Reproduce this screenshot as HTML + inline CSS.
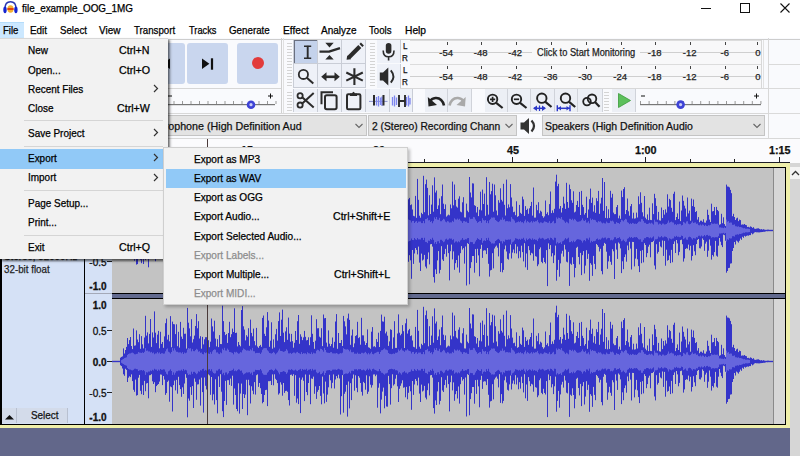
<!DOCTYPE html><html><head><meta charset="utf-8"><style>
html,body{margin:0;padding:0}
body{width:800px;height:456px;overflow:hidden;position:relative;background:#f0f0f0;font-family:"Liberation Sans",sans-serif}
.t{position:absolute;white-space:pre;transform-origin:0 0;-webkit-text-stroke:0.25px currentColor}
.a{position:absolute}
</style></head><body>
<div style="position:absolute;left:0;top:0;width:800px;height:22px;background:#fff"></div>
<svg style="position:absolute;left:0;top:0" width="22" height="22" viewBox="0 0 22 22">
<path d="M5 8.5 Q5 1.8 10.5 1.8 Q16 1.8 16 8.5" fill="none" stroke="#2836b0" stroke-width="1.4"/>
<ellipse cx="5" cy="9.8" rx="1.7" ry="3.4" fill="#1524d0"/>
<ellipse cx="15.9" cy="9.8" rx="1.7" ry="3.4" fill="#1524d0"/>
<ellipse cx="10.5" cy="9" rx="3.1" ry="3.7" fill="#f5b030"/>
<rect x="7.4" y="8" width="6.2" height="2" fill="#e04010"/>
</svg>
<div class="t" style="left:22px;top:3.76px;font-size:10.3px;line-height:10.3px;color:#000;font-weight:normal;transform:scaleX(0.9600);">file_example_OOG_1MG</div>
<div style="position:absolute;left:701px;top:8px;width:10px;height:1px;background:#111"></div>
<div style="position:absolute;left:740px;top:3px;width:8px;height:8px;border:1px solid #111"></div>
<svg style="position:absolute;left:780px;top:3px" width="11" height="10" viewBox="0 0 11 10">
<path d="M0.5 0.5 L9.5 9.5 M9.5 0.5 L0.5 9.5" stroke="#111" stroke-width="1.1"/></svg>
<div style="position:absolute;left:0;top:22px;width:800px;height:16px;background:#fff"></div>
<div style="position:absolute;left:0;top:22px;width:24px;height:16px;background:#cce8ff;border-top:1px solid #b4dcfa;box-sizing:border-box"></div>
<div class="t" style="left:2.8px;top:25.76px;font-size:10.3px;line-height:10.3px;color:#000;font-weight:normal;transform:scaleX(0.9297);">File</div>
<div class="t" style="left:29.7px;top:25.76px;font-size:10.3px;line-height:10.3px;color:#000;font-weight:normal;transform:scaleX(0.9623);">Edit</div>
<div class="t" style="left:59.9px;top:25.76px;font-size:10.3px;line-height:10.3px;color:#000;font-weight:normal;transform:scaleX(0.9414);">Select</div>
<div class="t" style="left:99.0px;top:25.76px;font-size:10.3px;line-height:10.3px;color:#000;font-weight:normal;transform:scaleX(0.9658);">View</div>
<div class="t" style="left:134.1px;top:25.76px;font-size:10.3px;line-height:10.3px;color:#000;font-weight:normal;transform:scaleX(0.9425);">Transport</div>
<div class="t" style="left:189.1px;top:25.76px;font-size:10.3px;line-height:10.3px;color:#000;font-weight:normal;transform:scaleX(0.8971);">Tracks</div>
<div class="t" style="left:228.8px;top:25.76px;font-size:10.3px;line-height:10.3px;color:#000;font-weight:normal;transform:scaleX(0.9483);">Generate</div>
<div class="t" style="left:282.5px;top:25.76px;font-size:10.3px;line-height:10.3px;color:#000;font-weight:normal;transform:scaleX(0.9926);">Effect</div>
<div class="t" style="left:321.1px;top:25.76px;font-size:10.3px;line-height:10.3px;color:#000;font-weight:normal;transform:scaleX(0.9740);">Analyze</div>
<div class="t" style="left:369.2px;top:25.76px;font-size:10.3px;line-height:10.3px;color:#000;font-weight:normal;transform:scaleX(0.9367);">Tools</div>
<div class="t" style="left:404.9px;top:25.76px;font-size:10.3px;line-height:10.3px;color:#000;font-weight:normal;transform:scaleX(0.9950);">Help</div>
<div style="position:absolute;left:0;top:38px;width:800px;height:101px;background:#f9fafd"></div>
<div class="a" style="left:0;top:39px;width:800px;height:1px;background:#cdcdcd"></div>
<div class="a" style="left:768px;top:64px;width:32px;height:1px;background:#dadada"></div>
<div class="a" style="left:768px;top:88px;width:32px;height:1px;background:#dadada"></div>
<div class="a" style="left:768px;top:113px;width:32px;height:1px;background:#dadada"></div>
<div class="a" style="left:763px;top:40px;width:1px;height:48px;background:#e2e2e2"></div>
<div class="a" style="left:140px;top:88px;width:141px;height:1px;background:#d6d6d6"></div>
<div class="a" style="left:140px;top:113px;width:141px;height:1px;background:#d6d6d6"></div>
<div class="a" style="left:281px;top:38px;width:1px;height:76px;background:#d0d0d0"></div>
<div class="a" style="left:283px;top:38px;width:1px;height:76px;background:#e0e0e0"></div>
<div class="a" style="left:144px;top:43px;width:41px;height:41px;background:#c9d6ee;border-radius:3px"></div>
<div class="a" style="left:187px;top:43px;width:41px;height:41px;background:#c9d6ee;border-radius:3px"></div>
<div class="a" style="left:237px;top:43px;width:41px;height:41px;background:#c9d6ee;border-radius:3px"></div>
<svg class="a" style="left:144px;top:43px" width="41" height="41"><rect x="16" y="15.3" width="2.2" height="11.4" fill="#111"/><path d="M26 15.6 L18.6 20.8 L26 25.9Z" fill="#111"/></svg>
<svg class="a" style="left:187px;top:43px" width="41" height="41"><path d="M15 15.6 L22.4 20.8 L15 25.9Z" fill="#111"/><rect x="23.9" y="15.3" width="2.2" height="11.4" fill="#111"/></svg>
<div class="a" style="left:252px;top:57px;width:12px;height:12px;border-radius:50%;background:#e23b3b"></div>
<svg class="a" style="left:160px;top:88px" width="122" height="26"><rect x="5" y="16" width="110" height="1.2" fill="#777"/><rect x="5.0" y="13" width="1" height="3" fill="#999"/><rect x="13.5" y="13" width="1" height="3" fill="#999"/><rect x="22.0" y="13" width="1" height="3" fill="#999"/><rect x="30.5" y="13" width="1" height="3" fill="#999"/><rect x="39.0" y="13" width="1" height="3" fill="#999"/><rect x="47.5" y="13" width="1" height="3" fill="#999"/><rect x="56.0" y="13" width="1" height="3" fill="#999"/><rect x="64.5" y="13" width="1" height="3" fill="#999"/><rect x="73.0" y="13" width="1" height="3" fill="#999"/><rect x="81.5" y="13" width="1" height="3" fill="#999"/><rect x="90.0" y="13" width="1" height="3" fill="#999"/><rect x="98.5" y="13" width="1" height="3" fill="#999"/><rect x="107.0" y="13" width="1" height="3" fill="#999"/><rect x="115.5" y="13" width="1" height="3" fill="#999"/><rect x="8" y="7.5" width="4" height="1" fill="#111"/><path d="M108 8 h5 M110.5 5.5 v5" stroke="#111" stroke-width="1"/><circle cx="91" cy="16.7" r="4.3" fill="#3e43d6"/><circle cx="91" cy="16.7" r="1.6" fill="#c8ccf5"/></svg>
<svg class="a" style="left:286px;top:40px" width="7" height="48"><rect x="1" y="3" width="5" height="1" fill="#d4d4d4"/><rect x="1" y="6" width="5" height="1" fill="#d4d4d4"/><rect x="1" y="9" width="5" height="1" fill="#d4d4d4"/><rect x="1" y="12" width="5" height="1" fill="#d4d4d4"/><rect x="1" y="15" width="5" height="1" fill="#d4d4d4"/><rect x="1" y="18" width="5" height="1" fill="#d4d4d4"/><rect x="1" y="21" width="5" height="1" fill="#d4d4d4"/><rect x="1" y="24" width="5" height="1" fill="#d4d4d4"/><rect x="1" y="27" width="5" height="1" fill="#d4d4d4"/><rect x="1" y="30" width="5" height="1" fill="#d4d4d4"/><rect x="1" y="33" width="5" height="1" fill="#d4d4d4"/><rect x="1" y="36" width="5" height="1" fill="#d4d4d4"/><rect x="1" y="39" width="5" height="1" fill="#d4d4d4"/><rect x="1" y="42" width="5" height="1" fill="#d4d4d4"/><rect x="1" y="45" width="5" height="1" fill="#d4d4d4"/></svg>
<svg class="a" style="left:286px;top:89px" width="7" height="24"><rect x="1" y="3" width="5" height="1" fill="#d4d4d4"/><rect x="1" y="6" width="5" height="1" fill="#d4d4d4"/><rect x="1" y="9" width="5" height="1" fill="#d4d4d4"/><rect x="1" y="12" width="5" height="1" fill="#d4d4d4"/><rect x="1" y="15" width="5" height="1" fill="#d4d4d4"/><rect x="1" y="18" width="5" height="1" fill="#d4d4d4"/><rect x="1" y="21" width="5" height="1" fill="#d4d4d4"/></svg>
<svg class="a" style="left:369px;top:40px" width="7" height="48"><rect x="1" y="3" width="5" height="1" fill="#d4d4d4"/><rect x="1" y="6" width="5" height="1" fill="#d4d4d4"/><rect x="1" y="9" width="5" height="1" fill="#d4d4d4"/><rect x="1" y="12" width="5" height="1" fill="#d4d4d4"/><rect x="1" y="15" width="5" height="1" fill="#d4d4d4"/><rect x="1" y="18" width="5" height="1" fill="#d4d4d4"/><rect x="1" y="21" width="5" height="1" fill="#d4d4d4"/><rect x="1" y="24" width="5" height="1" fill="#d4d4d4"/><rect x="1" y="27" width="5" height="1" fill="#d4d4d4"/><rect x="1" y="30" width="5" height="1" fill="#d4d4d4"/><rect x="1" y="33" width="5" height="1" fill="#d4d4d4"/><rect x="1" y="36" width="5" height="1" fill="#d4d4d4"/><rect x="1" y="39" width="5" height="1" fill="#d4d4d4"/><rect x="1" y="42" width="5" height="1" fill="#d4d4d4"/><rect x="1" y="45" width="5" height="1" fill="#d4d4d4"/></svg>
<svg class="a" style="left:603px;top:89px" width="7" height="24"><rect x="1" y="3" width="5" height="1" fill="#d4d4d4"/><rect x="1" y="6" width="5" height="1" fill="#d4d4d4"/><rect x="1" y="9" width="5" height="1" fill="#d4d4d4"/><rect x="1" y="12" width="5" height="1" fill="#d4d4d4"/><rect x="1" y="15" width="5" height="1" fill="#d4d4d4"/><rect x="1" y="18" width="5" height="1" fill="#d4d4d4"/><rect x="1" y="21" width="5" height="1" fill="#d4d4d4"/></svg>
<div class="a" style="left:293px;top:40px;width:73px;height:48px;background:#c9cdd6"></div>
<div class="a" style="left:294px;top:40px;width:23px;height:23px;background:#eef1f8"></div>
<div class="a" style="left:318px;top:40px;width:23px;height:23px;background:#eef1f8"></div>
<div class="a" style="left:342px;top:40px;width:23px;height:23px;background:#eef1f8"></div>
<div class="a" style="left:294px;top:64px;width:23px;height:23px;background:#eef1f8"></div>
<div class="a" style="left:318px;top:64px;width:23px;height:23px;background:#eef1f8"></div>
<div class="a" style="left:342px;top:64px;width:23px;height:23px;background:#eef1f8"></div>
<div class="a" style="left:294px;top:40px;width:22px;height:22px;background:#c4d2eb;border-left:1px solid #6a7080;border-top:1px solid #6a7080"></div>
<div class="a" style="left:293px;top:89px;width:120px;height:23px;background:#c9cdd6"></div>
<div class="a" style="left:294px;top:89px;width:23px;height:23px;background:#eef1f8"></div>
<div class="a" style="left:318px;top:89px;width:23px;height:23px;background:#eef1f8"></div>
<div class="a" style="left:342px;top:89px;width:23px;height:23px;background:#eef1f8"></div>
<div class="a" style="left:366px;top:89px;width:23px;height:23px;background:#eef1f8"></div>
<div class="a" style="left:390px;top:89px;width:22px;height:23px;background:#eef1f8"></div>
<div class="a" style="left:425px;top:89px;width:22px;height:23px;background:#eceff5;border-right:1px solid #d0d3da"></div>
<div class="a" style="left:448px;top:89px;width:23px;height:23px;background:#eceff5;border-right:1px solid #d0d3da"></div>
<div class="a" style="left:485px;top:89px;width:22px;height:23px;background:#eceff5;border-right:1px solid #d0d3da"></div>
<div class="a" style="left:508px;top:89px;width:22px;height:23px;background:#eceff5;border-right:1px solid #d0d3da"></div>
<div class="a" style="left:531px;top:89px;width:23px;height:23px;background:#eceff5;border-right:1px solid #d0d3da"></div>
<div class="a" style="left:555px;top:89px;width:22px;height:23px;background:#eceff5;border-right:1px solid #d0d3da"></div>
<div class="a" style="left:578px;top:89px;width:24px;height:23px;background:#eceff5;border-right:1px solid #d0d3da"></div>
<div class="a" style="left:612px;top:89px;width:23px;height:23px;background:#eceff5;border-right:1px solid #d0d3da"></div>
<svg class="a" style="left:0;top:0" width="800" height="140" stroke="#2b2b2b" fill="#2b2b2b"><path d="M307.7 45.8 V58.6" stroke-width="1.9" fill="none"/><path d="M304 46.3 H311.2 M304 58.2 H311.2" stroke-width="1.6" fill="none"/><path d="M319.5 51.7 H329 L340 48.2" stroke-width="2.3" fill="none" stroke-linejoin="round"/><path d="M325.3 42.8 H333.7 L329.5 47.6Z M329.5 55 L333.7 59.6 H325.3Z" stroke="none"/><path d="M348.6 57.8 L359.8 46.6" stroke-width="4.2" fill="none"/><path d="M360.9 45.5 L362.4 44" stroke-width="4.2" fill="none"/><path d="M346.6 59.8 L347.2 55.6 L351 59.3Z" stroke="none"/><circle cx="303.4" cy="74.4" r="4.6" stroke-width="1.8" fill="none"/><path d="M306.8 77.8 L313.3 83.6" stroke-width="2" fill="none"/><path d="M325 76.8 H336" stroke-width="2.6" fill="none"/><path d="M321.2 76.8 L326.5 72.3 V81.3Z M339.8 76.8 L334.5 72.3 V81.3Z" stroke="none"/><path d="M354.4 68.2 V85 M346.3 72.5 L362.8 80.6 M346.3 80.6 L362.8 72.5" stroke-width="2.1" fill="none"/><circle cx="300.1" cy="95.7" r="2.6" stroke-width="1.8" fill="none"/><circle cx="300.1" cy="105.1" r="2.6" stroke-width="1.8" fill="none"/><path d="M302.2 97.3 L313.7 107.6 M302.2 103.4 L313.7 93" stroke-width="2" fill="none"/><path d="M321.5 104.3 V92.3 H333" stroke-width="2" fill="none"/><rect x="325" y="95.3" width="11.6" height="14" rx="1.8" stroke-width="2" fill="none"/><rect x="347" y="94.3" width="13.4" height="15" rx="1.2" stroke-width="2" fill="none"/><path d="M350 96 V93.5 H352 Q353.5 90 355 93.5 H357 V96Z" stroke="none"/><path d="M369 101.4 H387.5" stroke="#8088c8" stroke-width="0.9" fill="none"/><path d="M376.5 97 V105.5 M378.5 96 V106.5 M380.5 97.5 V105 M382 96.5 V106" stroke="#7d86ee" stroke-width="1.3" fill="none"/><path d="M374 95 V105.5 M383.5 95 V105.5" stroke-width="2" fill="none"/><path d="M392.5 97 V105.5 M394.5 95.5 V106.5 M396.5 97.5 V105 M406.5 97 V105.5 M408.5 95.5 V106.5 M410 98 V104.5" stroke="#7d86ee" stroke-width="1.3" fill="none"/><path d="M399 95 V107 M405 95 V107 M399 101 H405" stroke-width="1.9" fill="none"/></svg>
<svg class="a" style="left:0;top:0" width="800" height="140" fill="none" stroke="#222"><path d="M444 105.5 Q442 97.5 435.5 98 Q431.5 98.3 430 101.5" stroke-width="2.6"/><path d="M427.8 97 L428.5 106.5 L437 105Z" fill="#222" stroke="none"/><path d="M449.5 105.5 Q451.5 97.5 458 98 Q462 98.3 463.5 101.5" stroke="#a9a9a9" stroke-width="2.6"/><path d="M465.7 97 L465 106.5 L456.5 105Z" fill="#a9a9a9" stroke="none"/><circle cx="492.6" cy="99.3" r="4.7" stroke-width="1.9"/><path d="M496.2 102.9 L502.6 108" stroke-width="2.2"/><path d="M490 99.3 H495.2 M492.6 96.7 V101.9" stroke-width="1.7"/><circle cx="516.5" cy="99.3" r="4.7" stroke-width="1.9"/><path d="M520.1 102.9 L526.5 108" stroke-width="2.2"/><path d="M513.9 99.3 H519.1" stroke-width="1.7"/><circle cx="541.8" cy="98.2" r="4.7" stroke-width="1.9"/><path d="M545.4 101.8 L551.5 107" stroke-width="2.2"/><path d="M534 108.3 H545" stroke="#2a36c8" stroke-width="1.5"/><path d="M533 108.3 L537 105.5 V111Z M546 108.3 L542 105.5 V111Z" fill="#2a36c8" stroke="none"/><path d="M539.5 105.5 V111" stroke="#2a36c8" stroke-width="1.2"/><circle cx="565.5" cy="98.2" r="4.7" stroke-width="1.9"/><path d="M569.1 101.8 L575.2 107" stroke-width="2.2"/><path d="M557.5 108.3 H570" stroke="#2a36c8" stroke-width="1.5"/><path d="M557.3 105.3 V111.3 M570 105.3 V111.3" stroke="#2a36c8" stroke-width="1.4"/><path d="M558 108.3 L561 106 V110.6Z M569.5 108.3 L566.5 106 V110.6Z" fill="#2a36c8" stroke="none"/><circle cx="587" cy="101.6" r="3.8" stroke-width="1.8"/><circle cx="592" cy="98.8" r="4.3" stroke-width="1.8"/><path d="M595 102 L599.5 106.8" stroke-width="2.2"/></svg>
<svg class="a" style="left:612px;top:89px" width="23" height="23"><path d="M6.5 4.5 L18.5 11.5 L6.5 18.5Z" fill="#5cc05c" stroke="#3a9a3a" stroke-width="0.8"/></svg>
<svg class="a" style="left:636px;top:89px" width="130" height="24"><rect x="4" y="15" width="121" height="1.2" fill="#777"/><rect x="4.0" y="12" width="1" height="3" fill="#999"/><rect x="12.6" y="12" width="1" height="3" fill="#999"/><rect x="21.2" y="12" width="1" height="3" fill="#999"/><rect x="29.8" y="12" width="1" height="3" fill="#999"/><rect x="38.4" y="12" width="1" height="3" fill="#999"/><rect x="47.0" y="12" width="1" height="3" fill="#999"/><rect x="55.6" y="12" width="1" height="3" fill="#999"/><rect x="64.2" y="12" width="1" height="3" fill="#999"/><rect x="72.8" y="12" width="1" height="3" fill="#999"/><rect x="81.4" y="12" width="1" height="3" fill="#999"/><rect x="90.0" y="12" width="1" height="3" fill="#999"/><rect x="98.6" y="12" width="1" height="3" fill="#999"/><rect x="107.2" y="12" width="1" height="3" fill="#999"/><rect x="115.8" y="12" width="1" height="3" fill="#999"/><rect x="124.4" y="12" width="1" height="3" fill="#999"/><rect x="5" y="6.5" width="4" height="1" fill="#111"/><path d="M118 7 h5 M120.5 4.5 v5" stroke="#111" stroke-width="1"/><circle cx="44.6" cy="15.6" r="4.3" fill="#3e43d6"/><circle cx="44.6" cy="15.6" r="1.6" fill="#c8ccf5"/></svg>
<div class="a" style="left:377px;top:40px;width:23px;height:23px;background:#eef1f8;border-right:1px solid #c9cdd6"></div>
<div class="a" style="left:377px;top:64px;width:23px;height:24px;background:#eef1f8;border-right:1px solid #c9cdd6"></div>
<svg class="a" style="left:0;top:0" width="420" height="100" fill="#2b2b2b" stroke="#2b2b2b"><rect x="385.8" y="43" width="5.6" height="10.8" rx="2.8" stroke="none"/><path d="M383.2 50.5 Q383.2 56.8 388.6 56.8 Q394 56.8 394 50.5 M388.6 56.8 V60.5" fill="none" stroke-width="1.6"/><path d="M379.8 72.5 H383 L388.3 67.5 V85.5 L383 80.5 H379.8Z" stroke="none"/><path d="M390.8 70.3 Q396 76.5 390.8 82.7" fill="none" stroke-width="1.9"/></svg>
<div class="a" style="left:410px;top:40px;width:352px;height:24px;background:#f8f8f9;border-top:1px solid #dcdcdc"></div>
<div class="a" style="left:410px;top:52px;width:352px;height:1px;background:#cfcfcf"></div>
<div class="t" style="left:402.5px;top:42.20px;font-size:8.5px;line-height:8.5px;color:#111;font-weight:normal;transform:scaleX(0.9500);">L</div>
<div class="t" style="left:402.3px;top:54.20px;font-size:8.5px;line-height:8.5px;color:#111;font-weight:normal;transform:scaleX(0.9500);">R</div>
<div class="a" style="left:410px;top:64px;width:352px;height:24px;background:#f8f8f9;border-top:1px solid #dcdcdc"></div>
<div class="a" style="left:410px;top:76px;width:352px;height:1px;background:#cfcfcf"></div>
<div class="t" style="left:402.5px;top:66.20px;font-size:8.5px;line-height:8.5px;color:#111;font-weight:normal;transform:scaleX(0.9500);">L</div>
<div class="t" style="left:402.3px;top:78.20px;font-size:8.5px;line-height:8.5px;color:#111;font-weight:normal;transform:scaleX(0.9500);">R</div>
<div class="a" style="left:761px;top:40px;width:1px;height:48px;background:#d8d8d8"></div>
<div class="a" style="left:768px;top:38px;width:1px;height:101px;background:#d8d8d8"></div>
<div class="a" style="left:400px;top:88px;width:368px;height:1px;background:#d8d8d8"></div>
<div class="a" style="left:140px;top:113px;width:628px;height:1px;background:#d8d8d8"></div>
<div class="a" style="left:140px;top:138px;width:660px;height:1px;background:#d8d8d8"></div>
<div class="a" style="left:446.5px;top:42px;width:1px;height:3px;background:#444"></div>
<div class="a" style="left:481.0px;top:42px;width:1px;height:3px;background:#444"></div>
<div class="a" style="left:515.5px;top:42px;width:1px;height:3px;background:#444"></div>
<div class="a" style="left:551.0px;top:42px;width:1px;height:3px;background:#444"></div>
<div class="a" style="left:585.5px;top:42px;width:1px;height:3px;background:#444"></div>
<div class="a" style="left:620.5px;top:42px;width:1px;height:3px;background:#444"></div>
<div class="a" style="left:655.0px;top:42px;width:1px;height:3px;background:#444"></div>
<div class="a" style="left:690.0px;top:42px;width:1px;height:3px;background:#444"></div>
<div class="a" style="left:725.0px;top:42px;width:1px;height:3px;background:#444"></div>
<div class="a" style="left:757.0px;top:42px;width:1px;height:3px;background:#444"></div>
<div class="a" style="left:446.5px;top:66px;width:1px;height:3px;background:#444"></div>
<div class="a" style="left:481.0px;top:66px;width:1px;height:3px;background:#444"></div>
<div class="a" style="left:515.5px;top:66px;width:1px;height:3px;background:#444"></div>
<div class="a" style="left:551.0px;top:66px;width:1px;height:3px;background:#444"></div>
<div class="a" style="left:585.5px;top:66px;width:1px;height:3px;background:#444"></div>
<div class="a" style="left:620.5px;top:66px;width:1px;height:3px;background:#444"></div>
<div class="a" style="left:655.0px;top:66px;width:1px;height:3px;background:#444"></div>
<div class="a" style="left:690.0px;top:66px;width:1px;height:3px;background:#444"></div>
<div class="a" style="left:725.0px;top:66px;width:1px;height:3px;background:#444"></div>
<div class="a" style="left:757.0px;top:66px;width:1px;height:3px;background:#444"></div>
<div class="t" style="left:439.35px;top:47.70px;font-size:9.5px;line-height:9.5px;color:#222;font-weight:normal;transform:scaleX(1.0000);">-54</div>
<div class="t" style="left:473.85px;top:47.70px;font-size:9.5px;line-height:9.5px;color:#222;font-weight:normal;transform:scaleX(1.0000);">-48</div>
<div class="t" style="left:508.35px;top:47.70px;font-size:9.5px;line-height:9.5px;color:#222;font-weight:normal;transform:scaleX(1.0000);">-42</div>
<div class="t" style="left:647.8499999999999px;top:47.70px;font-size:9.5px;line-height:9.5px;color:#222;font-weight:normal;transform:scaleX(1.0000);">-18</div>
<div class="t" style="left:682.8499999999999px;top:47.70px;font-size:9.5px;line-height:9.5px;color:#222;font-weight:normal;transform:scaleX(1.0000);">-12</div>
<div class="t" style="left:720.5px;top:47.70px;font-size:9.5px;line-height:9.5px;color:#222;font-weight:normal;transform:scaleX(1.0000);">-6</div>
<div class="t" style="left:755.15px;top:47.70px;font-size:9.5px;line-height:9.5px;color:#222;font-weight:normal;transform:scaleX(1.0000);">0</div>
<div class="t" style="left:439.35px;top:71.70px;font-size:9.5px;line-height:9.5px;color:#222;font-weight:normal;transform:scaleX(1.0000);">-54</div>
<div class="t" style="left:473.85px;top:71.70px;font-size:9.5px;line-height:9.5px;color:#222;font-weight:normal;transform:scaleX(1.0000);">-48</div>
<div class="t" style="left:508.35px;top:71.70px;font-size:9.5px;line-height:9.5px;color:#222;font-weight:normal;transform:scaleX(1.0000);">-42</div>
<div class="t" style="left:543.8499999999999px;top:71.70px;font-size:9.5px;line-height:9.5px;color:#222;font-weight:normal;transform:scaleX(1.0000);">-36</div>
<div class="t" style="left:578.3499999999999px;top:71.70px;font-size:9.5px;line-height:9.5px;color:#222;font-weight:normal;transform:scaleX(1.0000);">-30</div>
<div class="t" style="left:613.3499999999999px;top:71.70px;font-size:9.5px;line-height:9.5px;color:#222;font-weight:normal;transform:scaleX(1.0000);">-24</div>
<div class="t" style="left:647.8499999999999px;top:71.70px;font-size:9.5px;line-height:9.5px;color:#222;font-weight:normal;transform:scaleX(1.0000);">-18</div>
<div class="t" style="left:682.8499999999999px;top:71.70px;font-size:9.5px;line-height:9.5px;color:#222;font-weight:normal;transform:scaleX(1.0000);">-12</div>
<div class="t" style="left:720.5px;top:71.70px;font-size:9.5px;line-height:9.5px;color:#222;font-weight:normal;transform:scaleX(1.0000);">-6</div>
<div class="t" style="left:755.15px;top:71.70px;font-size:9.5px;line-height:9.5px;color:#222;font-weight:normal;transform:scaleX(1.0000);">0</div>
<div class="a" style="left:532px;top:47px;width:108px;height:10px;background:#f8f8f9"></div>
<div class="t" style="left:536.6px;top:47.50px;font-size:10px;line-height:10px;color:#222;font-weight:normal;transform:scaleX(0.9250);">Click to Start Monitoring</div>
<div class="a" style="left:144.5px;top:115px;width:222.5px;height:21px;background:#e3e3e3;border:1px solid #c4c4c4;box-sizing:border-box"></div><div class="t" style="left:148.1px;top:121.76px;font-size:10.3px;line-height:10.3px;color:#111;font-weight:normal;transform:scaleX(1.0404);">Microphone (High Definition Aud</div><svg class="a" style="left:354.0px;top:122.5px" width="10" height="6"><path d="M1.5 1 L5 4.5 L8.5 1" fill="none" stroke="#666" stroke-width="1.1"/></svg>
<div class="a" style="left:368px;top:115px;width:149px;height:21px;background:#e3e3e3;border:1px solid #c4c4c4;box-sizing:border-box"></div><div class="t" style="left:371.6px;top:121.76px;font-size:10.3px;line-height:10.3px;color:#111;font-weight:normal;transform:scaleX(0.9961);">2 (Stereo) Recording Chann</div><svg class="a" style="left:504px;top:122.5px" width="10" height="6"><path d="M1.5 1 L5 4.5 L8.5 1" fill="none" stroke="#666" stroke-width="1.1"/></svg>
<div class="a" style="left:541.5px;top:115px;width:223.5px;height:21px;background:#e3e3e3;border:1px solid #c4c4c4;box-sizing:border-box"></div><div class="t" style="left:545.1px;top:121.76px;font-size:10.3px;line-height:10.3px;color:#111;font-weight:normal;transform:scaleX(1.0171);">Speakers (High Definition Audio</div><svg class="a" style="left:752.0px;top:122.5px" width="10" height="6"><path d="M1.5 1 L5 4.5 L8.5 1" fill="none" stroke="#666" stroke-width="1.1"/></svg>
<svg class="a" style="left:518px;top:115px" width="22" height="22" fill="#333"><path d="M2.5 7.5 H6 L11 3 V19 L6 14.5 H2.5Z"/><path d="M13.5 5.5 Q18.5 11 13.5 16.5" fill="none" stroke="#333" stroke-width="2.2"/></svg>
<div class="a" style="left:0;top:139px;width:800px;height:28px;background:#fbfbfd"></div>
<div class="a" style="left:0;top:162px;width:790px;height:1px;background:#1e1e28"></div>
<div class="a" style="left:113px;top:157px;width:1px;height:5px;background:#222"></div>
<div class="a" style="left:157px;top:159px;width:1px;height:3px;background:#222"></div>
<div class="a" style="left:202px;top:159px;width:1px;height:3px;background:#222"></div>
<div class="a" style="left:246px;top:157px;width:1px;height:5px;background:#222"></div>
<div class="a" style="left:290px;top:159px;width:1px;height:3px;background:#222"></div>
<div class="a" style="left:335px;top:159px;width:1px;height:3px;background:#222"></div>
<div class="a" style="left:379px;top:157px;width:1px;height:5px;background:#222"></div>
<div class="a" style="left:424px;top:159px;width:1px;height:3px;background:#222"></div>
<div class="a" style="left:468px;top:159px;width:1px;height:3px;background:#222"></div>
<div class="a" style="left:512px;top:157px;width:1px;height:5px;background:#222"></div>
<div class="a" style="left:557px;top:159px;width:1px;height:3px;background:#222"></div>
<div class="a" style="left:601px;top:159px;width:1px;height:3px;background:#222"></div>
<div class="a" style="left:645px;top:157px;width:1px;height:5px;background:#222"></div>
<div class="a" style="left:690px;top:159px;width:1px;height:3px;background:#222"></div>
<div class="a" style="left:734px;top:159px;width:1px;height:3px;background:#222"></div>
<div class="a" style="left:779px;top:157px;width:1px;height:5px;background:#222"></div>
<div class="t" style="left:240.515px;top:145.76px;font-size:10.3px;line-height:10.3px;color:#111;font-weight:bold;transform:scaleX(1.0485);">15</div>
<div class="t" style="left:373.015px;top:145.76px;font-size:10.3px;line-height:10.3px;color:#111;font-weight:bold;transform:scaleX(1.0485);">30</div>
<div class="t" style="left:506.81499999999994px;top:145.76px;font-size:10.3px;line-height:10.3px;color:#111;font-weight:bold;transform:scaleX(1.0485);">45</div>
<div class="t" style="left:635.015px;top:145.76px;font-size:10.3px;line-height:10.3px;color:#111;font-weight:bold;transform:scaleX(1.0485);">1:00</div>
<div class="t" style="left:768.515px;top:145.76px;font-size:10.3px;line-height:10.3px;color:#111;font-weight:bold;transform:scaleX(1.0485);">1:15</div>
<div class="a" style="left:0;top:163px;width:790px;height:265px;background:#efefaa"></div>
<div class="a" style="left:0;top:167px;width:786px;height:258px;background:#000"></div>
<div class="a" style="left:1.5px;top:168px;width:82.5px;height:256px;background:#d5e1f6"></div>
<div class="a" style="left:85px;top:168px;width:27px;height:256px;background:#d5e1f6"></div>
<div class="a" style="left:112px;top:168px;width:661px;height:125px;background:#c3c3c3"></div>
<div class="a" style="left:112px;top:299px;width:661px;height:125px;background:#c3c3c3"></div>
<div class="a" style="left:773px;top:168px;width:12px;height:125px;background:#d7d7d7;border-left:1px solid #8a8a8a;box-sizing:border-box"></div>
<div class="a" style="left:773px;top:299px;width:12px;height:125px;background:#d7d7d7;border-left:1px solid #8a8a8a;box-sizing:border-box"></div>
<div class="a" style="left:112px;top:294px;width:673px;height:4px;background:#626a8e"></div>
<div class="a" style="left:85px;top:293px;width:27px;height:1px;background:#a4a9b8"></div>
<div class="a" style="left:790px;top:163px;width:10px;height:293px;background:#d6d6d6"></div>
<div class="a" style="left:790px;top:167px;width:10px;height:12px;background:#f4f4f4"></div>
<svg class="a" style="left:790px;top:167px" width="10" height="12"><path d="M2 8 L5.5 4.5 L9 8" fill="none" stroke="#333" stroke-width="1.3"/></svg>
<div class="a" style="left:0;top:428px;width:790px;height:28px;background:#62678a"></div>
<div class="t" style="left:4px;top:263.70px;font-size:11px;line-height:11px;color:#222;font-weight:normal;transform:scaleX(0.8900);">32-bit float</div>
<div class="t" style="left:4px;top:251.20px;font-size:11px;line-height:11px;color:#222;font-weight:normal;transform:scaleX(0.8900);">Stereo, 32000Hz</div>
<div class="a" style="left:2px;top:408px;width:14.5px;height:15px;background:#d3dbea;border-right:1px solid #b8c0d0;box-sizing:border-box"></div>
<svg class="a" style="left:2px;top:408px" width="15" height="15"><path d="M3 11.5 L7.5 7 L12 11.5Z" fill="#111"/></svg>
<div class="a" style="left:17px;top:408px;width:50.5px;height:15px;background:#d3dbea;border-right:1px solid #b8c0d0;box-sizing:border-box"></div>
<div class="t" style="left:31px;top:409.80px;font-size:11px;line-height:11px;color:#111;font-weight:normal;transform:scaleX(0.9000);">Select</div>
<div class="a" style="left:80px;top:170.2px;width:26.6px;text-align:right;font-size:10px;line-height:10px;color:#111;font-weight:bold;white-space:pre;-webkit-text-stroke:0.3px #111">1.0</div>
<div class="a" style="left:80px;top:195.7px;width:26.6px;text-align:right;font-size:10px;line-height:10px;color:#111;font-weight:normal;white-space:pre;-webkit-text-stroke:0.3px #111">0.5</div><div class="a" style="left:107px;top:199px;width:4.5px;height:1px;background:#222"></div>
<div class="a" style="left:80px;top:226.7px;width:26.6px;text-align:right;font-size:10px;line-height:10px;color:#111;font-weight:bold;white-space:pre;-webkit-text-stroke:0.3px #111">0.0</div><div class="a" style="left:107px;top:230px;width:4.5px;height:1px;background:#222"></div>
<div class="a" style="left:80px;top:257.7px;width:26.6px;text-align:right;font-size:10px;line-height:10px;color:#111;font-weight:normal;white-space:pre;-webkit-text-stroke:0.3px #111">-0.5</div><div class="a" style="left:107px;top:261px;width:4.5px;height:1px;background:#222"></div>
<div class="a" style="left:80px;top:282.2px;width:26.6px;text-align:right;font-size:10px;line-height:10px;color:#111;font-weight:bold;white-space:pre;-webkit-text-stroke:0.3px #111">-1.0</div>
<div class="a" style="left:80px;top:301.2px;width:26.6px;text-align:right;font-size:10px;line-height:10px;color:#111;font-weight:bold;white-space:pre;-webkit-text-stroke:0.3px #111">1.0</div>
<div class="a" style="left:80px;top:326.7px;width:26.6px;text-align:right;font-size:10px;line-height:10px;color:#111;font-weight:normal;white-space:pre;-webkit-text-stroke:0.3px #111">0.5</div><div class="a" style="left:107px;top:330px;width:4.5px;height:1px;background:#222"></div>
<div class="a" style="left:80px;top:357.7px;width:26.6px;text-align:right;font-size:10px;line-height:10px;color:#111;font-weight:bold;white-space:pre;-webkit-text-stroke:0.3px #111">0.0</div><div class="a" style="left:107px;top:361px;width:4.5px;height:1px;background:#222"></div>
<div class="a" style="left:80px;top:388.7px;width:26.6px;text-align:right;font-size:10px;line-height:10px;color:#111;font-weight:normal;white-space:pre;-webkit-text-stroke:0.3px #111">-0.5</div><div class="a" style="left:107px;top:392px;width:4.5px;height:1px;background:#222"></div>
<div class="a" style="left:80px;top:413.2px;width:26.6px;text-align:right;font-size:10px;line-height:10px;color:#111;font-weight:bold;white-space:pre;-webkit-text-stroke:0.3px #111">-1.0</div>
<svg class="a" style="left:112px;top:0" width="661" height="430"><path d="M0.5 229.8V231.2M1.5 229.8V231.2M2.5 229.8V231.2M3.5 229.8V231.2M4.5 229.8V231.2M5.5 229.8V231.2M6.5 229.8V231.2M7.5 229.8V231.2M8.5 226.7V234.3M9.5 225.9V235.1M10.5 225.4V237.5M11.5 217.4V243.3M12.5 222.5V244.8M13.5 219.0V237.8M14.5 215.9V238.9M15.5 207.0V251.0M16.5 213.1V246.7M17.5 209.1V245.3M18.5 206.0V246.1M19.5 215.0V243.4M20.5 218.1V250.1M21.5 197.5V258.8M22.5 214.7V260.8M23.5 214.4V248.6M24.5 199.4V264.6M25.5 208.5V264.1M26.5 211.2V246.7M27.5 203.2V243.9M28.5 217.8V259.8M29.5 205.1V263.2M30.5 213.3V254.2M31.5 217.4V264.0M32.5 206.5V249.9M33.5 184.8V260.2M34.5 204.6V252.5M35.5 201.4V252.0M36.5 212.4V267.3M37.5 202.9V244.3M38.5 188.0V244.1M39.5 215.9V243.2M40.5 201.4V250.3M41.5 206.5V253.0M42.5 180.4V251.2M43.5 201.7V261.2M44.5 212.1V255.1M45.5 203.6V253.9M46.5 199.9V253.0M47.5 217.3V250.6M48.5 200.8V243.5M49.5 212.9V243.7M50.5 211.0V254.1M51.5 216.8V245.0M52.5 205.4V248.6M53.5 192.2V263.9M54.5 187.6V262.1M55.5 208.6V250.9M56.5 203.8V249.6M57.5 210.3V270.7M58.5 185.1V255.5M59.5 216.2V256.2M60.5 190.6V280.5M61.5 193.1V254.1M62.5 193.3V249.6M63.5 203.1V259.4M64.5 193.3V248.9M65.5 215.2V262.7M66.5 200.8V245.8M67.5 216.6V254.1M68.5 190.9V258.1M69.5 205.6V265.8M70.5 207.9V256.3M71.5 196.8V263.0M72.5 202.8V252.5M73.5 202.7V243.2M74.5 217.6V246.8M75.5 176.9V286.3M76.5 191.7V267.5M77.5 197.4V269.7M78.5 205.3V256.1M79.5 188.2V263.9M80.5 211.5V255.1M81.5 208.2V277.0M82.5 204.6V247.5M83.5 195.0V250.8M84.5 183.1V268.8M85.5 197.3V253.5M86.5 190.2V253.3M87.5 207.5V248.5M88.5 205.2V274.6M89.5 217.7V246.7M90.5 205.9V261.1M91.5 213.4V281.6M92.5 208.3V246.5M93.5 206.2V254.8M94.5 206.2V258.5M95.5 210.0V258.5M96.5 209.2V243.4M97.5 216.2V244.4M98.5 210.7V263.8M99.5 187.5V246.0M100.5 195.4V269.3M101.5 200.5V263.3M102.5 189.7V273.5M103.5 207.6V248.3M104.5 215.4V269.1M105.5 208.2V282.4M106.5 216.1V245.4M107.5 204.1V256.0M108.5 213.0V243.2M109.5 213.1V260.7M110.5 174.7V280.2M111.5 190.1V286.1M112.5 200.9V270.0M113.5 204.1V249.9M114.5 203.0V273.9M115.5 211.9V249.2M116.5 202.0V249.2M117.5 190.8V253.9M118.5 206.2V247.6M119.5 203.2V254.9M120.5 197.6V244.7M121.5 201.0V273.6M122.5 177.3V257.5M123.5 202.0V264.0M124.5 201.7V278.0M125.5 215.4V280.2M126.5 211.0V252.3M127.5 213.9V282.6M128.5 215.3V262.6M129.5 179.0V252.6M130.5 175.1V278.0M131.5 195.3V263.0M132.5 198.6V267.0M133.5 209.4V263.6M134.5 204.2V248.8M135.5 205.7V284.2M136.5 197.2V248.8M137.5 214.8V254.3M138.5 188.6V272.5M139.5 201.9V255.3M140.5 205.3V259.7M141.5 197.6V263.2M142.5 210.1V251.1M143.5 214.3V263.6M144.5 196.9V244.2M145.5 215.5V243.4M146.5 216.8V255.9M147.5 215.0V252.0M148.5 213.9V257.2M149.5 215.8V263.0M150.5 186.9V272.3M151.5 184.5V271.0M152.5 202.8V264.0M153.5 205.0V259.1M154.5 196.3V258.8M155.5 181.1V275.1M156.5 189.5V250.2M157.5 215.8V250.2M158.5 209.7V249.9M159.5 191.3V254.0M160.5 217.7V243.4M161.5 208.4V254.3M162.5 216.5V243.3M163.5 203.3V247.8M164.5 197.9V249.1M165.5 209.6V252.1M166.5 190.1V263.6M167.5 181.4V262.3M168.5 205.0V251.3M169.5 188.7V253.6M170.5 178.6V264.7M171.5 201.7V252.0M172.5 211.1V261.9M173.5 200.4V260.1M174.5 196.3V259.8M175.5 208.8V260.8M176.5 186.6V269.1M177.5 202.6V274.5M178.5 210.7V243.9M179.5 202.9V243.6M180.5 210.2V244.9M181.5 216.7V243.2M182.5 211.8V264.8M183.5 200.0V244.2M184.5 209.0V271.7M185.5 190.2V267.5M186.5 184.0V273.1M187.5 212.8V246.7M188.5 203.3V282.1M189.5 205.7V248.7M190.5 209.1V246.5M191.5 206.4V249.8M192.5 199.9V270.1M193.5 205.8V243.5M194.5 209.4V261.0M195.5 209.0V264.2M196.5 206.3V252.0M197.5 214.2V243.7M198.5 206.2V273.2M199.5 184.3V247.5M200.5 202.8V247.9M201.5 211.0V245.6M202.5 217.8V262.8M203.5 209.7V255.4M204.5 188.2V267.9M205.5 197.3V260.8M206.5 197.2V258.9M207.5 205.7V255.0M208.5 206.6V264.9M209.5 197.2V273.3M210.5 215.1V245.6M211.5 183.5V262.5M212.5 187.3V272.4M213.5 187.0V250.6M214.5 211.6V270.9M215.5 215.7V263.6M216.5 199.4V256.3M217.5 212.7V243.8M218.5 215.1V249.3M219.5 213.1V257.3M220.5 206.5V251.8M221.5 216.7V243.4M222.5 210.8V257.5M223.5 190.5V248.5M224.5 183.1V245.1M225.5 217.8V247.2M226.5 202.0V243.7M227.5 212.0V247.5M228.5 212.0V283.5M229.5 209.0V265.2M230.5 215.0V244.1M231.5 184.9V281.7M232.5 190.3V262.8M233.5 195.4V260.7M234.5 203.4V253.9M235.5 187.4V285.6M236.5 182.6V250.5M237.5 188.9V277.4M238.5 213.8V252.2M239.5 204.5V269.1M240.5 198.5V247.5M241.5 216.2V243.5M242.5 212.4V259.7M243.5 205.0V244.3M244.5 204.2V256.9M245.5 190.8V261.2M246.5 207.1V245.1M247.5 206.2V246.7M248.5 213.7V252.0M249.5 186.8V260.8M250.5 204.3V264.6M251.5 204.4V250.9M252.5 210.3V252.1M253.5 214.0V258.7M254.5 212.0V244.3M255.5 198.4V262.9M256.5 216.3V260.7M257.5 216.8V245.3M258.5 217.8V253.7M259.5 200.7V256.6M260.5 196.1V254.2M261.5 215.6V243.5M262.5 215.2V243.4M263.5 216.2V245.2M264.5 208.1V243.7M265.5 210.9V276.7M266.5 201.7V256.7M267.5 216.0V252.3M268.5 199.9V282.4M269.5 183.6V268.6M270.5 190.4V260.6M271.5 190.7V256.6M272.5 185.7V277.3M273.5 202.4V264.9M274.5 200.6V275.5M275.5 204.7V275.7M276.5 214.9V244.9M277.5 210.4V253.1M278.5 198.3V273.6M279.5 198.9V257.2M280.5 217.8V243.3M281.5 206.4V254.5M282.5 190.2V253.2M283.5 216.9V247.7M284.5 216.9V243.9M285.5 202.5V255.3M286.5 183.4V271.0M287.5 201.7V257.8M288.5 204.3V254.8M289.5 202.8V252.4M290.5 194.1V249.3M291.5 200.2V256.7M292.5 217.0V256.3M293.5 192.3V266.3M294.5 187.7V255.9M295.5 202.6V268.3M296.5 199.3V261.8M297.5 197.9V255.2M298.5 205.1V260.3M299.5 204.4V278.8M300.5 209.5V250.0M301.5 215.8V263.9M302.5 216.3V253.5M303.5 195.9V248.0M304.5 217.8V249.9M305.5 178.9V254.4M306.5 199.8V246.6M307.5 215.7V262.6M308.5 217.7V271.0M309.5 212.8V253.6M310.5 214.1V260.5M311.5 175.8V259.6M312.5 212.2V254.9M313.5 184.2V266.6M314.5 179.6V268.4M315.5 187.9V259.2M316.5 215.3V252.4M317.5 195.2V264.4M318.5 214.0V244.3M319.5 204.6V244.0M320.5 185.3V246.6M321.5 211.7V277.1M322.5 177.4V282.6M323.5 192.5V269.4M324.5 190.5V274.0M325.5 209.0V260.4M326.5 205.4V251.1M327.5 198.5V273.4M328.5 214.2V269.9M329.5 196.2V246.2M330.5 184.5V259.5M331.5 203.7V261.0M332.5 209.0V254.1M333.5 204.4V248.9M334.5 216.6V256.7M335.5 215.5V244.7M336.5 214.6V253.1M337.5 215.3V280.4M338.5 204.5V251.2M339.5 208.3V244.6M340.5 181.6V259.4M341.5 205.3V251.4M342.5 184.5V269.8M343.5 199.9V263.2M344.5 206.5V260.0M345.5 207.6V267.5M346.5 198.7V255.5M347.5 196.3V272.6M348.5 211.6V253.2M349.5 212.3V246.1M350.5 202.3V249.6M351.5 197.2V248.1M352.5 217.4V263.6M353.5 217.5V246.5M354.5 203.6V285.5M355.5 210.7V243.2M356.5 212.2V244.0M357.5 177.0V284.3M358.5 192.5V268.1M359.5 197.4V262.2M360.5 183.3V256.0M361.5 183.5V256.0M362.5 205.2V272.7M363.5 205.9V249.1M364.5 212.5V262.9M365.5 207.0V248.8M366.5 216.1V255.4M367.5 209.7V276.3M368.5 191.7V248.9M369.5 210.4V244.8M370.5 189.6V257.9M371.5 204.0V250.7M372.5 193.6V250.2M373.5 215.8V250.5M374.5 177.2V254.1M375.5 204.8V248.0M376.5 214.6V263.8M377.5 182.0V276.6M378.5 194.3V270.4M379.5 191.1V269.9M380.5 183.7V253.2M381.5 211.7V268.4M382.5 184.5V248.5M383.5 195.3V246.7M384.5 210.5V245.6M385.5 215.3V247.7M386.5 200.2V256.4M387.5 202.7V243.2M388.5 188.3V271.9M389.5 199.8V263.1M390.5 201.5V272.3M391.5 183.8V269.9M392.5 204.8V249.3M393.5 215.5V245.5M394.5 179.6V251.5M395.5 208.2V258.8M396.5 204.4V259.6M397.5 207.3V253.4M398.5 184.1V244.6M399.5 197.5V258.5M400.5 206.6V252.6M401.5 212.2V249.5M402.5 211.7V253.2M403.5 215.2V244.2M404.5 201.3V253.5M405.5 216.8V246.6M406.5 216.1V258.3M407.5 204.9V251.2M408.5 212.8V257.6M409.5 213.9V245.7M410.5 196.6V252.1M411.5 199.4V261.4M412.5 215.9V243.2M413.5 206.1V267.3M414.5 210.0V253.5M415.5 208.7V269.9M416.5 213.8V246.1M417.5 208.3V250.2M418.5 206.0V255.2M419.5 201.9V252.8M420.5 215.6V253.5M421.5 187.5V260.7M422.5 217.6V244.4M423.5 217.6V256.2M424.5 204.8V256.7M425.5 210.2V266.2M426.5 202.2V264.4M427.5 213.3V249.2M428.5 210.7V247.4M429.5 211.7V261.9M430.5 216.1V263.2M431.5 217.7V257.8M432.5 216.4V262.0M433.5 200.5V263.5M434.5 213.9V250.1M435.5 212.3V286.1M436.5 215.2V243.4M437.5 204.1V249.1M438.5 191.5V245.1M439.5 213.1V256.4M440.5 210.4V253.2M441.5 212.8V263.1M442.5 208.8V255.3M443.5 181.6V245.6M444.5 174.7V280.7M445.5 186.2V269.9M446.5 183.8V259.9M447.5 208.7V276.7M448.5 206.0V263.4M449.5 212.5V253.6M450.5 207.9V250.8M451.5 196.7V256.6M452.5 203.6V244.8M453.5 208.9V249.5M454.5 182.8V261.7M455.5 202.0V262.4M456.5 207.8V251.9M457.5 184.6V285.9M458.5 189.1V263.7M459.5 200.3V264.8M460.5 202.8V257.3M461.5 191.3V264.0M462.5 212.4V277.3M463.5 211.6V267.9M464.5 205.0V247.8M465.5 200.9V246.8M466.5 207.0V257.0M467.5 191.9V264.4M468.5 215.0V252.9M469.5 190.9V275.1M470.5 204.8V255.2M471.5 207.1V251.1M472.5 214.6V273.5M473.5 213.0V265.6M474.5 196.7V250.2M475.5 217.8V258.9M476.5 209.5V253.8M477.5 199.2V280.8M478.5 188.6V263.2M479.5 202.9V264.8M480.5 197.6V275.9M481.5 211.6V255.9M482.5 205.2V263.9M483.5 212.8V269.2M484.5 198.2V244.0M485.5 201.1V245.2M486.5 190.9V246.9M487.5 213.8V251.5M488.5 203.5V248.8M489.5 197.7V271.1M490.5 178.0V274.3M491.5 210.8V245.8M492.5 182.0V242.9M493.5 217.9V243.9M494.5 206.1V251.7M495.5 218.3V268.8M496.5 209.3V261.4M497.5 217.9V255.8M498.5 190.8V261.8M499.5 197.6V264.8M500.5 193.8V249.2M501.5 212.6V251.3M502.5 214.2V279.0M503.5 214.1V243.4M504.5 207.1V249.6M505.5 205.0V258.9M506.5 218.3V242.5M507.5 215.6V243.7M508.5 218.8V248.4M509.5 190.6V273.1M510.5 197.1V261.3M511.5 189.0V269.2M512.5 187.2V257.1M513.5 214.1V254.4M514.5 210.0V261.7M515.5 198.5V245.5M516.5 211.3V250.2M517.5 215.7V241.8M518.5 206.2V248.6M519.5 204.0V269.5M520.5 218.5V241.9M521.5 212.7V242.0M522.5 218.6V266.4M523.5 218.3V258.6M524.5 212.6V248.9M525.5 217.5V259.3M526.5 196.3V266.1M527.5 204.2V272.1M528.5 192.3V250.9M529.5 202.8V263.2M530.5 212.3V250.2M531.5 216.4V262.4M532.5 196.0V243.2M533.5 217.7V245.0M534.5 219.3V257.2M535.5 214.4V253.1M536.5 220.1V246.7M537.5 207.7V244.7M538.5 219.9V257.3M539.5 220.1V242.1M540.5 203.3V242.0M541.5 214.1V240.9M542.5 193.8V265.5M543.5 198.2V269.4M544.5 205.9V244.2M545.5 219.6V253.6M546.5 211.9V251.9M547.5 220.3V241.8M548.5 220.6V246.5M549.5 207.5V247.4M550.5 218.1V240.5M551.5 210.0V255.9M552.5 214.6V240.9M553.5 209.4V265.7M554.5 212.6V249.7M555.5 194.3V260.7M556.5 206.6V260.0M557.5 198.9V255.5M558.5 200.1V263.1M559.5 207.8V249.9M560.5 211.8V262.3M561.5 193.8V244.0M562.5 191.7V241.4M563.5 220.1V253.0M564.5 217.0V240.0M565.5 213.4V243.4M566.5 219.0V255.3M567.5 201.6V251.9M568.5 221.1V240.1M569.5 210.5V239.7M570.5 195.5V244.2M571.5 200.8V261.6M572.5 205.7V258.4M573.5 208.5V249.0M574.5 216.6V248.2M575.5 197.5V248.7M576.5 213.4V244.6M577.5 210.6V250.3M578.5 220.7V245.8M579.5 198.6V260.5M580.5 206.1V256.0M581.5 199.5V245.2M582.5 206.9V251.3M583.5 212.0V255.2M584.5 211.1V244.0M585.5 219.6V239.9M586.5 217.1V239.0M587.5 222.2V248.2M588.5 220.7V248.5M589.5 220.7V246.5M590.5 221.8V238.4M591.5 219.3V239.9M592.5 222.5V250.8M593.5 222.7V243.6M594.5 220.5V241.7M595.5 209.7V256.8M596.5 214.9V250.7M597.5 219.6V239.5M598.5 222.0V245.7M599.5 203.7V259.6M600.5 211.4V255.0M601.5 211.0V256.5M602.5 207.0V252.1M603.5 215.1V240.9M604.5 206.9V255.7M605.5 210.0V256.7M606.5 211.2V245.7M607.5 224.7V238.0M608.5 224.2V241.7M609.5 213.8V245.2M610.5 223.2V247.1M611.5 217.3V234.7M612.5 224.1V235.2M613.5 225.9V240.8M614.5 184.6V272.7M615.5 186.5V271.0M616.5 186.7V268.1M617.5 187.4V267.8M618.5 189.9V263.6M619.5 193.2V263.3M620.5 216.2V251.0M621.5 213.8V248.0M622.5 217.0V242.0M623.5 220.0V244.5M624.5 218.4V240.6M625.5 217.7V241.5M626.5 221.1V242.6M627.5 219.6V240.8M628.5 220.1V238.5M629.5 224.7V239.8M630.5 224.4V236.8M631.5 224.6V237.8M632.5 224.0V235.9M633.5 224.9V236.6M634.5 225.2V235.9M635.5 227.0V235.5M636.5 226.8V235.7M637.5 227.4V235.1M638.5 226.4V235.1M639.5 226.9V233.2M640.5 227.9V234.3M641.5 227.2V233.5M642.5 228.6V232.5M643.5 228.9V232.1M644.5 228.6V232.3M645.5 228.4V232.3M646.5 228.3V232.4M647.5 228.9V232.4M648.5 229.4V232.2M649.5 229.1V232.1M650.5 229.6V232.0M651.5 229.2V231.8M652.5 229.6V231.8M653.5 229.8V231.5M654.5 229.8V231.2M655.5 229.6V231.3M656.5 229.6V231.2M657.5 229.8V231.2M658.5 229.8V231.2M659.5 229.8V231.2M660.5 229.8V231.2" stroke="#3434c9" stroke-width="1" fill="none"/><path d="M9.5 229.1V231.9M10.5 228.5V232.5M11.5 227.9V233.1M12.5 227.1V233.9M13.5 226.7V234.3M14.5 226.3V234.7M15.5 223.9V237.1M16.5 223.0V238.0M17.5 222.5V238.5M18.5 222.4V238.6M19.5 221.8V239.2M20.5 221.6V239.4M21.5 222.2V238.8M22.5 223.2V237.8M23.5 223.3V237.7M24.5 222.9V238.1M25.5 222.7V238.3M26.5 221.0V240.0M27.5 221.6V239.4M28.5 221.7V239.3M29.5 222.0V239.0M30.5 221.3V239.7M31.5 222.0V239.0M32.5 220.8V240.2M33.5 217.1V243.9M34.5 219.8V241.2M35.5 219.5V241.5M36.5 220.5V240.5M37.5 220.4V240.6M38.5 221.5V239.5M39.5 220.9V240.1M40.5 222.2V238.8M41.5 221.5V239.5M42.5 223.2V237.8M43.5 222.4V238.6M44.5 222.4V238.6M45.5 221.0V240.0M46.5 222.4V238.6M47.5 221.4V239.6M48.5 223.0V238.0M49.5 222.2V238.8M50.5 222.2V238.8M51.5 222.7V238.3M52.5 222.5V238.5M53.5 220.3V240.7M54.5 218.2V242.8M55.5 217.4V243.6M56.5 220.7V240.3M57.5 221.4V239.6M58.5 222.6V238.4M59.5 221.0V240.0M60.5 217.0V244.0M61.5 219.6V241.4M62.5 217.3V243.7M63.5 219.3V241.7M64.5 220.8V240.2M65.5 220.8V240.2M66.5 221.5V239.5M67.5 221.4V239.6M68.5 221.3V239.7M69.5 222.3V238.7M70.5 221.1V239.9M71.5 223.0V238.0M72.5 221.5V239.5M73.5 222.2V238.8M74.5 221.6V239.4M75.5 218.6V242.4M76.5 217.0V244.0M77.5 217.6V243.4M78.5 217.2V243.8M79.5 220.3V240.7M80.5 218.1V242.9M81.5 220.1V240.9M82.5 220.2V240.8M83.5 219.1V241.9M84.5 217.8V243.2M85.5 218.6V242.4M86.5 220.7V240.3M87.5 220.2V240.8M88.5 221.8V239.2M89.5 221.5V239.5M90.5 223.0V238.0M91.5 223.3V237.7M92.5 221.2V239.8M93.5 222.1V238.9M94.5 221.5V239.5M95.5 222.0V239.0M96.5 222.5V238.5M97.5 222.9V238.1M98.5 221.1V239.9M99.5 222.8V238.2M100.5 220.4V240.6M101.5 219.0V242.0M102.5 218.4V242.6M103.5 218.7V242.3M104.5 221.5V239.5M105.5 221.3V239.7M106.5 222.6V238.4M107.5 223.1V237.9M108.5 221.4V239.6M109.5 222.2V238.8M110.5 217.7V243.3M111.5 219.1V241.9M112.5 216.8V244.2M113.5 219.5V241.5M114.5 219.6V241.4M115.5 217.6V243.4M116.5 218.8V242.2M117.5 221.0V240.0M118.5 221.1V239.9M119.5 221.5V239.5M120.5 221.9V239.1M121.5 223.3V237.7M122.5 220.9V240.1M123.5 221.5V239.5M124.5 220.8V240.2M125.5 221.8V239.2M126.5 222.7V238.3M127.5 222.4V238.6M128.5 221.1V239.9M129.5 221.5V239.5M130.5 219.2V241.8M131.5 217.5V243.5M132.5 218.2V242.8M133.5 218.8V242.2M134.5 219.6V241.4M135.5 219.4V241.6M136.5 219.6V241.4M137.5 219.8V241.2M138.5 218.3V242.7M139.5 219.4V241.6M140.5 216.9V244.1M141.5 220.2V240.8M142.5 220.3V240.7M143.5 222.2V238.8M144.5 221.9V239.1M145.5 221.9V239.1M146.5 221.9V239.1M147.5 221.8V239.2M148.5 223.0V238.0M149.5 221.5V239.5M150.5 218.7V242.3M151.5 217.4V243.6M152.5 217.1V243.9M153.5 217.1V243.9M154.5 217.2V243.8M155.5 219.3V241.7M156.5 220.4V240.6M157.5 222.0V239.0M158.5 222.2V238.8M159.5 222.6V238.4M160.5 222.0V239.0M161.5 220.9V240.1M162.5 221.8V239.2M163.5 223.3V237.7M164.5 222.3V238.7M165.5 221.3V239.7M166.5 219.5V241.5M167.5 217.7V243.3M168.5 219.9V241.1M169.5 220.0V241.0M170.5 220.3V240.7M171.5 220.9V240.1M172.5 220.5V240.5M173.5 219.9V241.1M174.5 218.1V242.9M175.5 219.5V241.5M176.5 222.3V238.7M177.5 222.4V238.6M178.5 221.9V239.1M179.5 222.9V238.1M180.5 222.1V238.9M181.5 221.5V239.5M182.5 221.6V239.4M183.5 222.4V238.6M184.5 221.4V239.6M185.5 220.9V240.1M186.5 222.0V239.0M187.5 222.4V238.6M188.5 223.1V237.9M189.5 221.1V239.9M190.5 223.0V238.0M191.5 222.1V238.9M192.5 222.5V238.5M193.5 222.2V238.8M194.5 223.2V237.8M195.5 221.2V239.8M196.5 222.2V238.8M197.5 222.4V238.6M198.5 223.0V238.0M199.5 221.3V239.7M200.5 223.1V237.9M201.5 221.7V239.3M202.5 222.3V238.7M203.5 222.4V238.6M204.5 219.7V241.3M205.5 218.7V242.3M206.5 219.1V241.9M207.5 220.2V240.8M208.5 217.7V243.3M209.5 218.0V243.0M210.5 219.1V241.9M211.5 220.7V240.3M212.5 216.9V244.1M213.5 219.0V242.0M214.5 221.3V239.7M215.5 221.7V239.3M216.5 221.8V239.2M217.5 222.0V239.0M218.5 221.2V239.8M219.5 221.1V239.9M220.5 222.3V238.7M221.5 222.4V238.6M222.5 222.4V238.6M223.5 222.5V238.5M224.5 222.0V239.0M225.5 222.6V238.4M226.5 223.2V237.8M227.5 222.7V238.3M228.5 222.1V238.9M229.5 222.4V238.6M230.5 221.7V239.3M231.5 217.2V243.8M232.5 218.0V243.0M233.5 218.4V242.6M234.5 218.5V242.5M235.5 218.2V242.8M236.5 218.8V242.2M237.5 220.3V240.7M238.5 218.6V242.4M239.5 221.2V239.8M240.5 221.3V239.7M241.5 220.9V240.1M242.5 222.7V238.3M243.5 222.6V238.4M244.5 222.8V238.2M245.5 221.6V239.4M246.5 222.8V238.2M247.5 222.7V238.3M248.5 223.0V238.0M249.5 221.8V239.2M250.5 221.8V239.2M251.5 222.4V238.6M252.5 221.7V239.3M253.5 220.9V240.1M254.5 222.2V238.8M255.5 223.3V237.7M256.5 221.9V239.1M257.5 223.3V237.7M258.5 222.3V238.7M259.5 220.8V240.2M260.5 222.9V238.1M261.5 223.3V237.7M262.5 222.4V238.6M263.5 221.9V239.1M264.5 221.4V239.6M265.5 220.8V240.2M266.5 220.8V240.2M267.5 223.0V238.0M268.5 220.9V240.1M269.5 219.3V241.7M270.5 219.1V241.9M271.5 218.2V242.8M272.5 217.3V243.7M273.5 218.5V242.5M274.5 218.7V242.3M275.5 219.3V241.7M276.5 222.0V239.0M277.5 222.8V238.2M278.5 222.9V238.1M279.5 223.2V237.8M280.5 222.9V238.1M281.5 222.5V238.5M282.5 222.9V238.1M283.5 221.7V239.3M284.5 221.8V239.2M285.5 221.3V239.7M286.5 218.4V242.6M287.5 219.8V241.2M288.5 218.7V242.3M289.5 217.4V243.6M290.5 219.4V241.6M291.5 219.8V241.2M292.5 220.8V240.2M293.5 219.3V241.7M294.5 219.4V241.6M295.5 218.2V242.8M296.5 219.5V241.5M297.5 220.0V241.0M298.5 220.4V240.6M299.5 222.5V238.5M300.5 221.0V240.0M301.5 220.9V240.1M302.5 223.0V238.0M303.5 221.7V239.3M304.5 221.1V239.9M305.5 222.9V238.1M306.5 221.6V239.4M307.5 221.6V239.4M308.5 221.5V239.5M309.5 223.1V237.9M310.5 223.1V237.9M311.5 221.0V240.0M312.5 223.2V237.8M313.5 219.1V241.9M314.5 218.9V242.1M315.5 217.9V243.1M316.5 220.4V240.6M317.5 220.1V240.9M318.5 222.0V239.0M319.5 221.1V239.9M320.5 223.2V237.8M321.5 221.2V239.8M322.5 217.4V243.6M323.5 219.0V242.0M324.5 217.0V244.0M325.5 219.6V241.4M326.5 219.8V241.2M327.5 217.8V243.2M328.5 221.2V239.8M329.5 221.2V239.8M330.5 220.1V240.9M331.5 218.8V242.2M332.5 219.5V241.5M333.5 221.6V239.4M334.5 222.3V238.7M335.5 221.1V239.9M336.5 221.5V239.5M337.5 222.6V238.4M338.5 222.3V238.7M339.5 222.4V238.6M340.5 220.9V240.1M341.5 221.8V239.2M342.5 218.3V242.7M343.5 219.4V241.6M344.5 219.6V241.4M345.5 218.6V242.4M346.5 219.7V241.3M347.5 218.8V242.2M348.5 220.6V240.4M349.5 221.3V239.7M350.5 223.0V238.0M351.5 221.2V239.8M352.5 221.1V239.9M353.5 221.8V239.2M354.5 221.6V239.4M355.5 222.8V238.2M356.5 223.0V238.0M357.5 217.4V243.6M358.5 219.1V241.9M359.5 218.9V242.1M360.5 218.8V242.2M361.5 216.9V244.1M362.5 217.3V243.7M363.5 219.5V241.5M364.5 221.1V239.9M365.5 222.8V238.2M366.5 222.0V239.0M367.5 221.2V239.8M368.5 221.0V240.0M369.5 222.8V238.2M370.5 218.2V242.8M371.5 220.1V240.9M372.5 220.6V240.4M373.5 220.0V241.0M374.5 222.9V238.1M375.5 220.9V240.1M376.5 223.2V237.8M377.5 220.2V240.8M378.5 219.1V241.9M379.5 217.5V243.5M380.5 217.7V243.3M381.5 217.4V243.6M382.5 217.6V243.4M383.5 220.0V241.0M384.5 220.8V240.2M385.5 221.6V239.4M386.5 222.1V238.9M387.5 221.2V239.8M388.5 219.6V241.4M389.5 219.8V241.2M390.5 217.5V243.5M391.5 219.8V241.2M392.5 219.2V241.8M393.5 221.4V239.6M394.5 221.1V239.9M395.5 221.1V239.9M396.5 221.5V239.5M397.5 221.3V239.7M398.5 221.7V239.3M399.5 216.9V244.1M400.5 218.7V242.3M401.5 219.4V241.6M402.5 220.6V240.4M403.5 222.8V238.2M404.5 222.4V238.6M405.5 222.1V238.9M406.5 221.4V239.6M407.5 222.1V238.9M408.5 221.1V239.9M409.5 222.3V238.7M410.5 222.1V238.9M411.5 223.2V237.8M412.5 221.2V239.8M413.5 219.6V241.4M414.5 222.5V238.5M415.5 221.0V240.0M416.5 221.9V239.1M417.5 222.7V238.3M418.5 222.2V238.8M419.5 221.1V239.9M420.5 222.6V238.4M421.5 221.2V239.8M422.5 221.9V239.1M423.5 221.2V239.8M424.5 221.2V239.8M425.5 219.9V241.1M426.5 222.2V238.8M427.5 223.3V237.7M428.5 222.3V238.7M429.5 222.5V238.5M430.5 223.1V237.9M431.5 222.5V238.5M432.5 221.3V239.7M433.5 221.7V239.3M434.5 222.0V239.0M435.5 222.7V238.3M436.5 222.7V238.3M437.5 221.1V239.9M438.5 223.3V237.7M439.5 223.0V238.0M440.5 221.7V239.3M441.5 220.8V240.2M442.5 223.3V237.7M443.5 223.1V237.9M444.5 217.4V243.6M445.5 218.8V242.2M446.5 217.6V243.4M447.5 218.0V243.0M448.5 218.7V242.3M449.5 217.0V244.0M450.5 219.6V241.4M451.5 220.2V240.8M452.5 221.4V239.6M453.5 222.9V238.1M454.5 221.7V239.3M455.5 222.4V238.6M456.5 223.3V237.7M457.5 218.8V242.2M458.5 218.9V242.1M459.5 219.9V241.1M460.5 218.7V242.3M461.5 220.3V240.7M462.5 218.9V242.1M463.5 219.7V241.3M464.5 221.2V239.8M465.5 221.8V239.2M466.5 221.7V239.3M467.5 221.4V239.6M468.5 221.2V239.8M469.5 220.2V240.8M470.5 218.4V242.6M471.5 220.4V240.6M472.5 221.0V240.0M473.5 219.8V241.2M474.5 222.6V238.4M475.5 222.5V238.5M476.5 221.2V239.8M477.5 223.4V237.6M478.5 218.4V242.6M479.5 220.1V240.9M480.5 219.0V242.0M481.5 219.9V241.1M482.5 219.8V241.2M483.5 220.3V240.7M484.5 221.9V239.1M485.5 222.5V238.5M486.5 221.1V239.9M487.5 221.7V239.3M488.5 221.3V239.7M489.5 222.5V238.5M490.5 223.4V237.6M491.5 222.7V238.3M492.5 223.3V237.7M493.5 223.5V237.5M494.5 221.6V239.4M495.5 222.7V238.3M496.5 223.1V237.9M497.5 222.9V238.1M498.5 220.7V240.3M499.5 221.2V239.8M500.5 220.6V240.4M501.5 221.6V239.4M502.5 223.7V237.3M503.5 223.8V237.2M504.5 222.1V238.9M505.5 222.9V238.1M506.5 223.0V238.0M507.5 223.8V237.2M508.5 222.1V238.9M509.5 219.8V241.2M510.5 220.4V240.6M511.5 221.4V239.6M512.5 220.0V241.0M513.5 218.8V242.2M514.5 219.4V241.6M515.5 222.2V238.8M516.5 222.8V238.2M517.5 224.1V236.9M518.5 223.2V237.8M519.5 224.0V237.0M520.5 222.9V238.1M521.5 223.3V237.7M522.5 223.9V237.1M523.5 223.6V237.4M524.5 224.0V237.0M525.5 223.1V237.9M526.5 221.8V239.2M527.5 221.4V239.6M528.5 221.7V239.3M529.5 219.1V241.9M530.5 219.2V241.8M531.5 221.1V239.9M532.5 222.8V238.2M533.5 222.8V238.2M534.5 223.9V237.1M535.5 224.0V237.0M536.5 223.6V237.4M537.5 222.8V238.2M538.5 223.6V237.4M539.5 222.7V238.3M540.5 223.6V237.4M541.5 224.6V236.4M542.5 219.7V241.3M543.5 221.7V239.3M544.5 221.7V239.3M545.5 222.2V238.8M546.5 224.5V236.5M547.5 223.6V237.4M548.5 223.8V237.2M549.5 224.9V236.1M550.5 223.6V237.4M551.5 223.6V237.4M552.5 224.5V236.5M553.5 224.3V236.7M554.5 224.0V237.0M555.5 222.7V238.3M556.5 220.5V240.5M557.5 222.7V238.3M558.5 222.1V238.9M559.5 221.6V239.4M560.5 222.4V238.6M561.5 222.6V238.4M562.5 224.6V236.4M563.5 224.1V236.9M564.5 225.1V235.9M565.5 224.1V236.9M566.5 224.3V236.7M567.5 223.8V237.2M568.5 223.9V237.1M569.5 225.4V235.6M570.5 225.0V236.0M571.5 221.9V239.1M572.5 222.6V238.4M573.5 223.5V237.5M574.5 221.5V239.5M575.5 221.2V239.8M576.5 223.7V237.3M577.5 224.3V236.7M578.5 223.9V237.1M579.5 222.7V238.3M580.5 221.5V239.5M581.5 223.0V238.0M582.5 222.6V238.4M583.5 222.4V238.6M584.5 223.8V237.2M585.5 223.5V237.5M586.5 225.1V235.9M587.5 225.3V235.7M588.5 224.5V236.5M589.5 225.5V235.5M590.5 224.5V236.5M591.5 224.8V236.2M592.5 226.0V235.0M593.5 224.7V236.3M594.5 225.9V235.1M595.5 226.1V234.9M596.5 225.1V235.9M597.5 225.4V235.6M598.5 224.8V236.2M599.5 223.2V237.8M600.5 223.8V237.2M601.5 223.8V237.2M602.5 223.5V237.5M603.5 223.8V237.2M604.5 223.8V237.2M605.5 223.6V237.4M606.5 224.8V236.2M607.5 227.5V233.5M608.5 227.4V233.6M609.5 227.7V233.3M610.5 227.7V233.3M611.5 228.1V232.9M612.5 227.3V233.7M613.5 228.0V233.0M614.5 219.6V241.4M615.5 221.7V239.3M616.5 221.1V239.9M617.5 222.8V238.2M618.5 222.5V238.5M619.5 222.6V238.4M620.5 224.8V236.2M621.5 224.8V236.2M622.5 224.4V236.6M623.5 226.2V234.8M624.5 226.3V234.7M625.5 226.7V234.3M626.5 226.3V234.7M627.5 227.1V233.9M628.5 227.0V234.0M629.5 227.3V233.7M630.5 227.7V233.3M631.5 228.3V232.7M632.5 228.1V232.9M633.5 228.7V232.3M634.5 228.7V232.3M635.5 228.6V232.4M636.5 228.8V232.2M637.5 229.0V232.0" stroke="#6666dd" stroke-width="1" fill="none"/><path d="M0.5 360.8V362.2M1.5 360.8V362.2M2.5 360.8V362.2M3.5 360.8V362.2M4.5 360.8V362.2M5.5 360.8V362.2M6.5 360.8V362.2M7.5 360.8V362.2M8.5 357.7V365.3M9.5 356.9V366.1M10.5 356.4V368.5M11.5 348.4V374.3M12.5 353.5V375.8M13.5 350.0V368.8M14.5 346.9V369.9M15.5 338.0V382.0M16.5 344.1V377.7M17.5 340.1V376.3M18.5 337.0V377.1M19.5 346.0V374.4M20.5 349.1V381.1M21.5 328.5V389.8M22.5 345.7V391.8M23.5 345.4V379.6M24.5 330.4V395.6M25.5 339.5V395.1M26.5 342.2V377.7M27.5 334.2V374.9M28.5 348.8V390.8M29.5 336.1V394.2M30.5 344.3V385.2M31.5 348.4V395.0M32.5 337.5V380.9M33.5 315.8V391.2M34.5 335.6V383.5M35.5 332.4V383.0M36.5 343.4V398.3M37.5 333.9V375.3M38.5 319.0V375.1M39.5 346.9V374.2M40.5 332.4V381.3M41.5 337.5V384.0M42.5 311.4V382.2M43.5 332.7V392.2M44.5 343.1V386.1M45.5 334.6V384.9M46.5 330.9V384.0M47.5 348.3V381.6M48.5 331.8V374.5M49.5 343.9V374.7M50.5 342.0V385.1M51.5 347.8V376.0M52.5 336.4V379.6M53.5 323.2V394.9M54.5 318.6V393.1M55.5 339.6V381.9M56.5 334.8V380.6M57.5 341.3V401.7M58.5 316.1V386.5M59.5 347.2V387.2M60.5 321.6V411.5M61.5 324.1V385.1M62.5 324.3V380.6M63.5 334.1V390.4M64.5 324.3V379.9M65.5 346.2V393.7M66.5 331.8V376.8M67.5 347.6V385.1M68.5 321.9V389.1M69.5 336.6V396.8M70.5 338.9V387.3M71.5 327.8V394.0M72.5 333.8V383.5M73.5 333.7V374.2M74.5 348.6V377.8M75.5 307.9V417.3M76.5 322.7V398.5M77.5 328.4V400.7M78.5 336.3V387.1M79.5 319.2V394.9M80.5 342.5V386.1M81.5 339.2V408.0M82.5 335.6V378.5M83.5 326.0V381.8M84.5 314.1V399.8M85.5 328.3V384.5M86.5 321.2V384.3M87.5 338.5V379.5M88.5 336.2V405.6M89.5 348.7V377.7M90.5 336.9V392.1M91.5 344.4V412.6M92.5 339.3V377.5M93.5 337.2V385.8M94.5 337.2V389.5M95.5 341.0V389.5M96.5 340.2V374.4M97.5 347.2V375.4M98.5 341.7V394.8M99.5 318.5V377.0M100.5 326.4V400.3M101.5 331.5V394.3M102.5 320.7V404.5M103.5 338.6V379.3M104.5 346.4V400.1M105.5 339.2V413.4M106.5 347.1V376.4M107.5 335.1V387.0M108.5 344.0V374.2M109.5 344.1V391.7M110.5 305.7V411.2M111.5 321.1V417.1M112.5 331.9V401.0M113.5 335.1V380.9M114.5 334.0V404.9M115.5 342.9V380.2M116.5 333.0V380.2M117.5 321.8V384.9M118.5 337.2V378.6M119.5 334.2V385.9M120.5 328.6V375.7M121.5 332.0V404.6M122.5 308.3V388.5M123.5 333.0V395.0M124.5 332.7V409.0M125.5 346.4V411.2M126.5 342.0V383.3M127.5 344.9V413.6M128.5 346.3V393.6M129.5 310.0V383.6M130.5 306.1V409.0M131.5 326.3V394.0M132.5 329.6V398.0M133.5 340.4V394.6M134.5 335.2V379.8M135.5 336.7V415.2M136.5 328.2V379.8M137.5 345.8V385.3M138.5 319.6V403.5M139.5 332.9V386.3M140.5 336.3V390.7M141.5 328.6V394.2M142.5 341.1V382.1M143.5 345.3V394.6M144.5 327.9V375.2M145.5 346.5V374.4M146.5 347.8V386.9M147.5 346.0V383.0M148.5 344.9V388.2M149.5 346.8V394.0M150.5 317.9V403.3M151.5 315.5V402.0M152.5 333.8V395.0M153.5 336.0V390.1M154.5 327.3V389.8M155.5 312.1V406.1M156.5 320.5V381.2M157.5 346.8V381.2M158.5 340.7V380.9M159.5 322.3V385.0M160.5 348.7V374.4M161.5 339.4V385.3M162.5 347.5V374.3M163.5 334.3V378.8M164.5 328.9V380.1M165.5 340.6V383.1M166.5 321.1V394.6M167.5 312.4V393.3M168.5 336.0V382.3M169.5 319.7V384.6M170.5 309.6V395.7M171.5 332.7V383.0M172.5 342.1V392.9M173.5 331.4V391.1M174.5 327.3V390.8M175.5 339.8V391.8M176.5 317.6V400.1M177.5 333.6V405.5M178.5 341.7V374.9M179.5 333.9V374.6M180.5 341.2V375.9M181.5 347.7V374.2M182.5 342.8V395.8M183.5 331.0V375.2M184.5 340.0V402.7M185.5 321.2V398.5M186.5 315.0V404.1M187.5 343.8V377.7M188.5 334.3V413.1M189.5 336.7V379.7M190.5 340.1V377.5M191.5 337.4V380.8M192.5 330.9V401.1M193.5 336.8V374.5M194.5 340.4V392.0M195.5 340.0V395.2M196.5 337.3V383.0M197.5 345.2V374.7M198.5 337.2V404.2M199.5 315.3V378.5M200.5 333.8V378.9M201.5 342.0V376.6M202.5 348.8V393.8M203.5 340.7V386.4M204.5 319.2V398.9M205.5 328.3V391.8M206.5 328.2V389.9M207.5 336.7V386.0M208.5 337.6V395.9M209.5 328.2V404.3M210.5 346.1V376.6M211.5 314.5V393.5M212.5 318.3V403.4M213.5 318.0V381.6M214.5 342.6V401.9M215.5 346.7V394.6M216.5 330.4V387.3M217.5 343.7V374.8M218.5 346.1V380.3M219.5 344.1V388.3M220.5 337.5V382.8M221.5 347.7V374.4M222.5 341.8V388.5M223.5 321.5V379.5M224.5 314.1V376.1M225.5 348.8V378.2M226.5 333.0V374.7M227.5 343.0V378.5M228.5 343.0V414.5M229.5 340.0V396.2M230.5 346.0V375.1M231.5 315.9V412.7M232.5 321.3V393.8M233.5 326.4V391.7M234.5 334.4V384.9M235.5 318.4V416.6M236.5 313.6V381.5M237.5 319.9V408.4M238.5 344.8V383.2M239.5 335.5V400.1M240.5 329.5V378.5M241.5 347.2V374.5M242.5 343.4V390.7M243.5 336.0V375.3M244.5 335.2V387.9M245.5 321.8V392.2M246.5 338.1V376.1M247.5 337.2V377.7M248.5 344.7V383.0M249.5 317.8V391.8M250.5 335.3V395.6M251.5 335.4V381.9M252.5 341.3V383.1M253.5 345.0V389.7M254.5 343.0V375.3M255.5 329.4V393.9M256.5 347.3V391.7M257.5 347.8V376.3M258.5 348.8V384.7M259.5 331.7V387.6M260.5 327.1V385.2M261.5 346.6V374.5M262.5 346.2V374.4M263.5 347.2V376.2M264.5 339.1V374.7M265.5 341.9V407.7M266.5 332.7V387.7M267.5 347.0V383.3M268.5 330.9V413.4M269.5 314.6V399.6M270.5 321.4V391.6M271.5 321.7V387.6M272.5 316.7V408.3M273.5 333.4V395.9M274.5 331.6V406.5M275.5 335.7V406.7M276.5 345.9V375.9M277.5 341.4V384.1M278.5 329.3V404.6M279.5 329.9V388.2M280.5 348.8V374.3M281.5 337.4V385.5M282.5 321.2V384.2M283.5 347.9V378.7M284.5 347.9V374.9M285.5 333.5V386.3M286.5 314.4V402.0M287.5 332.7V388.8M288.5 335.3V385.8M289.5 333.8V383.4M290.5 325.1V380.3M291.5 331.2V387.7M292.5 348.0V387.3M293.5 323.3V397.3M294.5 318.7V386.9M295.5 333.6V399.3M296.5 330.3V392.8M297.5 328.9V386.2M298.5 336.1V391.3M299.5 335.4V409.8M300.5 340.5V381.0M301.5 346.8V394.9M302.5 347.3V384.5M303.5 326.9V379.0M304.5 348.8V380.9M305.5 309.9V385.4M306.5 330.8V377.6M307.5 346.7V393.6M308.5 348.7V402.0M309.5 343.8V384.6M310.5 345.1V391.5M311.5 306.8V390.6M312.5 343.2V385.9M313.5 315.2V397.6M314.5 310.6V399.4M315.5 318.9V390.2M316.5 346.3V383.4M317.5 326.2V395.4M318.5 345.0V375.3M319.5 335.6V375.0M320.5 316.3V377.6M321.5 342.7V408.1M322.5 308.4V413.6M323.5 323.5V400.4M324.5 321.5V405.0M325.5 340.0V391.4M326.5 336.4V382.1M327.5 329.5V404.4M328.5 345.2V400.9M329.5 327.2V377.2M330.5 315.5V390.5M331.5 334.7V392.0M332.5 340.0V385.1M333.5 335.4V379.9M334.5 347.6V387.7M335.5 346.5V375.7M336.5 345.6V384.1M337.5 346.3V411.4M338.5 335.5V382.2M339.5 339.3V375.6M340.5 312.6V390.4M341.5 336.3V382.4M342.5 315.5V400.8M343.5 330.9V394.2M344.5 337.5V391.0M345.5 338.6V398.5M346.5 329.7V386.5M347.5 327.3V403.6M348.5 342.6V384.2M349.5 343.3V377.1M350.5 333.3V380.6M351.5 328.2V379.1M352.5 348.4V394.6M353.5 348.5V377.5M354.5 334.6V416.5M355.5 341.7V374.2M356.5 343.2V375.0M357.5 308.0V415.3M358.5 323.5V399.1M359.5 328.4V393.2M360.5 314.3V387.0M361.5 314.5V387.0M362.5 336.2V403.7M363.5 336.9V380.1M364.5 343.5V393.9M365.5 338.0V379.8M366.5 347.1V386.4M367.5 340.7V407.3M368.5 322.7V379.9M369.5 341.4V375.8M370.5 320.6V388.9M371.5 335.0V381.7M372.5 324.6V381.2M373.5 346.8V381.5M374.5 308.2V385.1M375.5 335.8V379.0M376.5 345.6V394.8M377.5 313.0V407.6M378.5 325.3V401.4M379.5 322.1V400.9M380.5 314.7V384.2M381.5 342.7V399.4M382.5 315.5V379.5M383.5 326.3V377.7M384.5 341.5V376.6M385.5 346.3V378.7M386.5 331.2V387.4M387.5 333.7V374.2M388.5 319.3V402.9M389.5 330.8V394.1M390.5 332.5V403.3M391.5 314.8V400.9M392.5 335.8V380.3M393.5 346.5V376.5M394.5 310.6V382.5M395.5 339.2V389.8M396.5 335.4V390.6M397.5 338.3V384.4M398.5 315.1V375.6M399.5 328.5V389.5M400.5 337.6V383.6M401.5 343.2V380.5M402.5 342.7V384.2M403.5 346.2V375.2M404.5 332.3V384.5M405.5 347.8V377.6M406.5 347.1V389.3M407.5 335.9V382.2M408.5 343.8V388.6M409.5 344.9V376.7M410.5 327.6V383.1M411.5 330.4V392.4M412.5 346.9V374.2M413.5 337.1V398.3M414.5 341.0V384.5M415.5 339.7V400.9M416.5 344.8V377.1M417.5 339.3V381.2M418.5 337.0V386.2M419.5 332.9V383.8M420.5 346.6V384.5M421.5 318.5V391.7M422.5 348.6V375.4M423.5 348.6V387.2M424.5 335.8V387.7M425.5 341.2V397.2M426.5 333.2V395.4M427.5 344.3V380.2M428.5 341.7V378.4M429.5 342.7V392.9M430.5 347.1V394.2M431.5 348.7V388.8M432.5 347.4V393.0M433.5 331.5V394.5M434.5 344.9V381.1M435.5 343.3V417.1M436.5 346.2V374.4M437.5 335.1V380.1M438.5 322.5V376.1M439.5 344.1V387.4M440.5 341.4V384.2M441.5 343.8V394.1M442.5 339.8V386.3M443.5 312.6V376.6M444.5 305.7V411.7M445.5 317.2V400.9M446.5 314.8V390.9M447.5 339.7V407.7M448.5 337.0V394.4M449.5 343.5V384.6M450.5 338.9V381.8M451.5 327.7V387.6M452.5 334.6V375.8M453.5 339.9V380.5M454.5 313.8V392.7M455.5 333.0V393.4M456.5 338.8V382.9M457.5 315.6V416.9M458.5 320.1V394.7M459.5 331.3V395.8M460.5 333.8V388.3M461.5 322.3V395.0M462.5 343.4V408.3M463.5 342.6V398.9M464.5 336.0V378.8M465.5 331.9V377.8M466.5 338.0V388.0M467.5 322.9V395.4M468.5 346.0V383.9M469.5 321.9V406.1M470.5 335.8V386.2M471.5 338.1V382.1M472.5 345.6V404.5M473.5 344.0V396.6M474.5 327.7V381.2M475.5 348.8V389.9M476.5 340.5V384.8M477.5 330.2V411.8M478.5 319.6V394.2M479.5 333.9V395.8M480.5 328.6V406.9M481.5 342.6V386.9M482.5 336.2V394.9M483.5 343.8V400.2M484.5 329.2V375.0M485.5 332.1V376.2M486.5 321.9V377.9M487.5 344.8V382.5M488.5 334.5V379.8M489.5 328.7V402.1M490.5 309.0V405.3M491.5 341.8V376.8M492.5 313.0V373.9M493.5 348.9V374.9M494.5 337.1V382.7M495.5 349.3V399.8M496.5 340.3V392.4M497.5 348.9V386.8M498.5 321.8V392.8M499.5 328.6V395.8M500.5 324.8V380.2M501.5 343.6V382.3M502.5 345.2V410.0M503.5 345.1V374.4M504.5 338.1V380.6M505.5 336.0V389.9M506.5 349.3V373.5M507.5 346.6V374.7M508.5 349.8V379.4M509.5 321.6V404.1M510.5 328.1V392.3M511.5 320.0V400.2M512.5 318.2V388.1M513.5 345.1V385.4M514.5 341.0V392.7M515.5 329.5V376.5M516.5 342.3V381.2M517.5 346.7V372.8M518.5 337.2V379.6M519.5 335.0V400.5M520.5 349.5V372.9M521.5 343.7V373.0M522.5 349.6V397.4M523.5 349.3V389.6M524.5 343.6V379.9M525.5 348.5V390.3M526.5 327.3V397.1M527.5 335.2V403.1M528.5 323.3V381.9M529.5 333.8V394.2M530.5 343.3V381.2M531.5 347.4V393.4M532.5 327.0V374.2M533.5 348.7V376.0M534.5 350.3V388.2M535.5 345.4V384.1M536.5 351.1V377.7M537.5 338.7V375.7M538.5 350.9V388.3M539.5 351.1V373.1M540.5 334.3V373.0M541.5 345.1V371.9M542.5 324.8V396.5M543.5 329.2V400.4M544.5 336.9V375.2M545.5 350.6V384.6M546.5 342.9V382.9M547.5 351.3V372.8M548.5 351.6V377.5M549.5 338.5V378.4M550.5 349.1V371.5M551.5 341.0V386.9M552.5 345.6V371.9M553.5 340.4V396.7M554.5 343.6V380.7M555.5 325.3V391.7M556.5 337.6V391.0M557.5 329.9V386.5M558.5 331.1V394.1M559.5 338.8V380.9M560.5 342.8V393.3M561.5 324.8V375.0M562.5 322.7V372.4M563.5 351.1V384.0M564.5 348.0V371.0M565.5 344.4V374.4M566.5 350.0V386.3M567.5 332.6V382.9M568.5 352.1V371.1M569.5 341.5V370.7M570.5 326.5V375.2M571.5 331.8V392.6M572.5 336.7V389.4M573.5 339.5V380.0M574.5 347.6V379.2M575.5 328.5V379.7M576.5 344.4V375.6M577.5 341.6V381.3M578.5 351.7V376.8M579.5 329.6V391.5M580.5 337.1V387.0M581.5 330.5V376.2M582.5 337.9V382.3M583.5 343.0V386.2M584.5 342.1V375.0M585.5 350.6V370.9M586.5 348.1V370.0M587.5 353.2V379.2M588.5 351.7V379.5M589.5 351.7V377.5M590.5 352.8V369.4M591.5 350.3V370.9M592.5 353.5V381.8M593.5 353.7V374.6M594.5 351.5V372.7M595.5 340.7V387.8M596.5 345.9V381.7M597.5 350.6V370.5M598.5 353.0V376.7M599.5 334.7V390.6M600.5 342.4V386.0M601.5 342.0V387.5M602.5 338.0V383.1M603.5 346.1V371.9M604.5 337.9V386.7M605.5 341.0V387.7M606.5 342.2V376.7M607.5 355.7V369.0M608.5 355.2V372.7M609.5 344.8V376.2M610.5 354.2V378.1M611.5 348.3V365.7M612.5 355.1V366.2M613.5 356.9V371.8M614.5 315.6V403.7M615.5 317.5V402.0M616.5 317.7V399.1M617.5 318.4V398.8M618.5 320.9V394.6M619.5 324.2V394.3M620.5 347.2V382.0M621.5 344.8V379.0M622.5 348.0V373.0M623.5 351.0V375.5M624.5 349.4V371.6M625.5 348.7V372.5M626.5 352.1V373.6M627.5 350.6V371.8M628.5 351.1V369.5M629.5 355.7V370.8M630.5 355.4V367.8M631.5 355.6V368.8M632.5 355.0V366.9M633.5 355.9V367.6M634.5 356.2V366.9M635.5 358.0V366.5M636.5 357.8V366.7M637.5 358.4V366.1M638.5 357.4V366.1M639.5 357.9V364.2M640.5 358.9V365.3M641.5 358.2V364.5M642.5 359.6V363.5M643.5 359.9V363.1M644.5 359.6V363.3M645.5 359.4V363.3M646.5 359.3V363.4M647.5 359.9V363.4M648.5 360.4V363.2M649.5 360.1V363.1M650.5 360.6V363.0M651.5 360.2V362.8M652.5 360.6V362.8M653.5 360.8V362.5M654.5 360.8V362.2M655.5 360.6V362.3M656.5 360.6V362.2M657.5 360.8V362.2M658.5 360.8V362.2M659.5 360.8V362.2M660.5 360.8V362.2" stroke="#3434c9" stroke-width="1" fill="none"/><path d="M9.5 360.1V362.9M10.5 359.5V363.5M11.5 358.9V364.1M12.5 358.1V364.9M13.5 357.7V365.3M14.5 357.3V365.7M15.5 354.9V368.1M16.5 354.0V369.0M17.5 353.5V369.5M18.5 353.4V369.6M19.5 352.8V370.2M20.5 352.6V370.4M21.5 353.2V369.8M22.5 354.2V368.8M23.5 354.3V368.7M24.5 353.9V369.1M25.5 353.7V369.3M26.5 352.0V371.0M27.5 352.6V370.4M28.5 352.7V370.3M29.5 353.0V370.0M30.5 352.3V370.7M31.5 353.0V370.0M32.5 351.8V371.2M33.5 348.1V374.9M34.5 350.8V372.2M35.5 350.5V372.5M36.5 351.5V371.5M37.5 351.4V371.6M38.5 352.5V370.5M39.5 351.9V371.1M40.5 353.2V369.8M41.5 352.5V370.5M42.5 354.2V368.8M43.5 353.4V369.6M44.5 353.4V369.6M45.5 352.0V371.0M46.5 353.4V369.6M47.5 352.4V370.6M48.5 354.0V369.0M49.5 353.2V369.8M50.5 353.2V369.8M51.5 353.7V369.3M52.5 353.5V369.5M53.5 351.3V371.7M54.5 349.2V373.8M55.5 348.4V374.6M56.5 351.7V371.3M57.5 352.4V370.6M58.5 353.6V369.4M59.5 352.0V371.0M60.5 348.0V375.0M61.5 350.6V372.4M62.5 348.3V374.7M63.5 350.3V372.7M64.5 351.8V371.2M65.5 351.8V371.2M66.5 352.5V370.5M67.5 352.4V370.6M68.5 352.3V370.7M69.5 353.3V369.7M70.5 352.1V370.9M71.5 354.0V369.0M72.5 352.5V370.5M73.5 353.2V369.8M74.5 352.6V370.4M75.5 349.6V373.4M76.5 348.0V375.0M77.5 348.6V374.4M78.5 348.2V374.8M79.5 351.3V371.7M80.5 349.1V373.9M81.5 351.1V371.9M82.5 351.2V371.8M83.5 350.1V372.9M84.5 348.8V374.2M85.5 349.6V373.4M86.5 351.7V371.3M87.5 351.2V371.8M88.5 352.8V370.2M89.5 352.5V370.5M90.5 354.0V369.0M91.5 354.3V368.7M92.5 352.2V370.8M93.5 353.1V369.9M94.5 352.5V370.5M95.5 353.0V370.0M96.5 353.5V369.5M97.5 353.9V369.1M98.5 352.1V370.9M99.5 353.8V369.2M100.5 351.4V371.6M101.5 350.0V373.0M102.5 349.4V373.6M103.5 349.7V373.3M104.5 352.5V370.5M105.5 352.3V370.7M106.5 353.6V369.4M107.5 354.1V368.9M108.5 352.4V370.6M109.5 353.2V369.8M110.5 348.7V374.3M111.5 350.1V372.9M112.5 347.8V375.2M113.5 350.5V372.5M114.5 350.6V372.4M115.5 348.6V374.4M116.5 349.8V373.2M117.5 352.0V371.0M118.5 352.1V370.9M119.5 352.5V370.5M120.5 352.9V370.1M121.5 354.3V368.7M122.5 351.9V371.1M123.5 352.5V370.5M124.5 351.8V371.2M125.5 352.8V370.2M126.5 353.7V369.3M127.5 353.4V369.6M128.5 352.1V370.9M129.5 352.5V370.5M130.5 350.2V372.8M131.5 348.5V374.5M132.5 349.2V373.8M133.5 349.8V373.2M134.5 350.6V372.4M135.5 350.4V372.6M136.5 350.6V372.4M137.5 350.8V372.2M138.5 349.3V373.7M139.5 350.4V372.6M140.5 347.9V375.1M141.5 351.2V371.8M142.5 351.3V371.7M143.5 353.2V369.8M144.5 352.9V370.1M145.5 352.9V370.1M146.5 352.9V370.1M147.5 352.8V370.2M148.5 354.0V369.0M149.5 352.5V370.5M150.5 349.7V373.3M151.5 348.4V374.6M152.5 348.1V374.9M153.5 348.1V374.9M154.5 348.2V374.8M155.5 350.3V372.7M156.5 351.4V371.6M157.5 353.0V370.0M158.5 353.2V369.8M159.5 353.6V369.4M160.5 353.0V370.0M161.5 351.9V371.1M162.5 352.8V370.2M163.5 354.3V368.7M164.5 353.3V369.7M165.5 352.3V370.7M166.5 350.5V372.5M167.5 348.7V374.3M168.5 350.9V372.1M169.5 351.0V372.0M170.5 351.3V371.7M171.5 351.9V371.1M172.5 351.5V371.5M173.5 350.9V372.1M174.5 349.1V373.9M175.5 350.5V372.5M176.5 353.3V369.7M177.5 353.4V369.6M178.5 352.9V370.1M179.5 353.9V369.1M180.5 353.1V369.9M181.5 352.5V370.5M182.5 352.6V370.4M183.5 353.4V369.6M184.5 352.4V370.6M185.5 351.9V371.1M186.5 353.0V370.0M187.5 353.4V369.6M188.5 354.1V368.9M189.5 352.1V370.9M190.5 354.0V369.0M191.5 353.1V369.9M192.5 353.5V369.5M193.5 353.2V369.8M194.5 354.2V368.8M195.5 352.2V370.8M196.5 353.2V369.8M197.5 353.4V369.6M198.5 354.0V369.0M199.5 352.3V370.7M200.5 354.1V368.9M201.5 352.7V370.3M202.5 353.3V369.7M203.5 353.4V369.6M204.5 350.7V372.3M205.5 349.7V373.3M206.5 350.1V372.9M207.5 351.2V371.8M208.5 348.7V374.3M209.5 349.0V374.0M210.5 350.1V372.9M211.5 351.7V371.3M212.5 347.9V375.1M213.5 350.0V373.0M214.5 352.3V370.7M215.5 352.7V370.3M216.5 352.8V370.2M217.5 353.0V370.0M218.5 352.2V370.8M219.5 352.1V370.9M220.5 353.3V369.7M221.5 353.4V369.6M222.5 353.4V369.6M223.5 353.5V369.5M224.5 353.0V370.0M225.5 353.6V369.4M226.5 354.2V368.8M227.5 353.7V369.3M228.5 353.1V369.9M229.5 353.4V369.6M230.5 352.7V370.3M231.5 348.2V374.8M232.5 349.0V374.0M233.5 349.4V373.6M234.5 349.5V373.5M235.5 349.2V373.8M236.5 349.8V373.2M237.5 351.3V371.7M238.5 349.6V373.4M239.5 352.2V370.8M240.5 352.3V370.7M241.5 351.9V371.1M242.5 353.7V369.3M243.5 353.6V369.4M244.5 353.8V369.2M245.5 352.6V370.4M246.5 353.8V369.2M247.5 353.7V369.3M248.5 354.0V369.0M249.5 352.8V370.2M250.5 352.8V370.2M251.5 353.4V369.6M252.5 352.7V370.3M253.5 351.9V371.1M254.5 353.2V369.8M255.5 354.3V368.7M256.5 352.9V370.1M257.5 354.3V368.7M258.5 353.3V369.7M259.5 351.8V371.2M260.5 353.9V369.1M261.5 354.3V368.7M262.5 353.4V369.6M263.5 352.9V370.1M264.5 352.4V370.6M265.5 351.8V371.2M266.5 351.8V371.2M267.5 354.0V369.0M268.5 351.9V371.1M269.5 350.3V372.7M270.5 350.1V372.9M271.5 349.2V373.8M272.5 348.3V374.7M273.5 349.5V373.5M274.5 349.7V373.3M275.5 350.3V372.7M276.5 353.0V370.0M277.5 353.8V369.2M278.5 353.9V369.1M279.5 354.2V368.8M280.5 353.9V369.1M281.5 353.5V369.5M282.5 353.9V369.1M283.5 352.7V370.3M284.5 352.8V370.2M285.5 352.3V370.7M286.5 349.4V373.6M287.5 350.8V372.2M288.5 349.7V373.3M289.5 348.4V374.6M290.5 350.4V372.6M291.5 350.8V372.2M292.5 351.8V371.2M293.5 350.3V372.7M294.5 350.4V372.6M295.5 349.2V373.8M296.5 350.5V372.5M297.5 351.0V372.0M298.5 351.4V371.6M299.5 353.5V369.5M300.5 352.0V371.0M301.5 351.9V371.1M302.5 354.0V369.0M303.5 352.7V370.3M304.5 352.1V370.9M305.5 353.9V369.1M306.5 352.6V370.4M307.5 352.6V370.4M308.5 352.5V370.5M309.5 354.1V368.9M310.5 354.1V368.9M311.5 352.0V371.0M312.5 354.2V368.8M313.5 350.1V372.9M314.5 349.9V373.1M315.5 348.9V374.1M316.5 351.4V371.6M317.5 351.1V371.9M318.5 353.0V370.0M319.5 352.1V370.9M320.5 354.2V368.8M321.5 352.2V370.8M322.5 348.4V374.6M323.5 350.0V373.0M324.5 348.0V375.0M325.5 350.6V372.4M326.5 350.8V372.2M327.5 348.8V374.2M328.5 352.2V370.8M329.5 352.2V370.8M330.5 351.1V371.9M331.5 349.8V373.2M332.5 350.5V372.5M333.5 352.6V370.4M334.5 353.3V369.7M335.5 352.1V370.9M336.5 352.5V370.5M337.5 353.6V369.4M338.5 353.3V369.7M339.5 353.4V369.6M340.5 351.9V371.1M341.5 352.8V370.2M342.5 349.3V373.7M343.5 350.4V372.6M344.5 350.6V372.4M345.5 349.6V373.4M346.5 350.7V372.3M347.5 349.8V373.2M348.5 351.6V371.4M349.5 352.3V370.7M350.5 354.0V369.0M351.5 352.2V370.8M352.5 352.1V370.9M353.5 352.8V370.2M354.5 352.6V370.4M355.5 353.8V369.2M356.5 354.0V369.0M357.5 348.4V374.6M358.5 350.1V372.9M359.5 349.9V373.1M360.5 349.8V373.2M361.5 347.9V375.1M362.5 348.3V374.7M363.5 350.5V372.5M364.5 352.1V370.9M365.5 353.8V369.2M366.5 353.0V370.0M367.5 352.2V370.8M368.5 352.0V371.0M369.5 353.8V369.2M370.5 349.2V373.8M371.5 351.1V371.9M372.5 351.6V371.4M373.5 351.0V372.0M374.5 353.9V369.1M375.5 351.9V371.1M376.5 354.2V368.8M377.5 351.2V371.8M378.5 350.1V372.9M379.5 348.5V374.5M380.5 348.7V374.3M381.5 348.4V374.6M382.5 348.6V374.4M383.5 351.0V372.0M384.5 351.8V371.2M385.5 352.6V370.4M386.5 353.1V369.9M387.5 352.2V370.8M388.5 350.6V372.4M389.5 350.8V372.2M390.5 348.5V374.5M391.5 350.8V372.2M392.5 350.2V372.8M393.5 352.4V370.6M394.5 352.1V370.9M395.5 352.1V370.9M396.5 352.5V370.5M397.5 352.3V370.7M398.5 352.7V370.3M399.5 347.9V375.1M400.5 349.7V373.3M401.5 350.4V372.6M402.5 351.6V371.4M403.5 353.8V369.2M404.5 353.4V369.6M405.5 353.1V369.9M406.5 352.4V370.6M407.5 353.1V369.9M408.5 352.1V370.9M409.5 353.3V369.7M410.5 353.1V369.9M411.5 354.2V368.8M412.5 352.2V370.8M413.5 350.6V372.4M414.5 353.5V369.5M415.5 352.0V371.0M416.5 352.9V370.1M417.5 353.7V369.3M418.5 353.2V369.8M419.5 352.1V370.9M420.5 353.6V369.4M421.5 352.2V370.8M422.5 352.9V370.1M423.5 352.2V370.8M424.5 352.2V370.8M425.5 350.9V372.1M426.5 353.2V369.8M427.5 354.3V368.7M428.5 353.3V369.7M429.5 353.5V369.5M430.5 354.1V368.9M431.5 353.5V369.5M432.5 352.3V370.7M433.5 352.7V370.3M434.5 353.0V370.0M435.5 353.7V369.3M436.5 353.7V369.3M437.5 352.1V370.9M438.5 354.3V368.7M439.5 354.0V369.0M440.5 352.7V370.3M441.5 351.8V371.2M442.5 354.3V368.7M443.5 354.1V368.9M444.5 348.4V374.6M445.5 349.8V373.2M446.5 348.6V374.4M447.5 349.0V374.0M448.5 349.7V373.3M449.5 348.0V375.0M450.5 350.6V372.4M451.5 351.2V371.8M452.5 352.4V370.6M453.5 353.9V369.1M454.5 352.7V370.3M455.5 353.4V369.6M456.5 354.3V368.7M457.5 349.8V373.2M458.5 349.9V373.1M459.5 350.9V372.1M460.5 349.7V373.3M461.5 351.3V371.7M462.5 349.9V373.1M463.5 350.7V372.3M464.5 352.2V370.8M465.5 352.8V370.2M466.5 352.7V370.3M467.5 352.4V370.6M468.5 352.2V370.8M469.5 351.2V371.8M470.5 349.4V373.6M471.5 351.4V371.6M472.5 352.0V371.0M473.5 350.8V372.2M474.5 353.6V369.4M475.5 353.5V369.5M476.5 352.2V370.8M477.5 354.4V368.6M478.5 349.4V373.6M479.5 351.1V371.9M480.5 350.0V373.0M481.5 350.9V372.1M482.5 350.8V372.2M483.5 351.3V371.7M484.5 352.9V370.1M485.5 353.5V369.5M486.5 352.1V370.9M487.5 352.7V370.3M488.5 352.3V370.7M489.5 353.5V369.5M490.5 354.4V368.6M491.5 353.7V369.3M492.5 354.3V368.7M493.5 354.5V368.5M494.5 352.6V370.4M495.5 353.7V369.3M496.5 354.1V368.9M497.5 353.9V369.1M498.5 351.7V371.3M499.5 352.2V370.8M500.5 351.6V371.4M501.5 352.6V370.4M502.5 354.7V368.3M503.5 354.8V368.2M504.5 353.1V369.9M505.5 353.9V369.1M506.5 354.0V369.0M507.5 354.8V368.2M508.5 353.1V369.9M509.5 350.8V372.2M510.5 351.4V371.6M511.5 352.4V370.6M512.5 351.0V372.0M513.5 349.8V373.2M514.5 350.4V372.6M515.5 353.2V369.8M516.5 353.8V369.2M517.5 355.1V367.9M518.5 354.2V368.8M519.5 355.0V368.0M520.5 353.9V369.1M521.5 354.3V368.7M522.5 354.9V368.1M523.5 354.6V368.4M524.5 355.0V368.0M525.5 354.1V368.9M526.5 352.8V370.2M527.5 352.4V370.6M528.5 352.7V370.3M529.5 350.1V372.9M530.5 350.2V372.8M531.5 352.1V370.9M532.5 353.8V369.2M533.5 353.8V369.2M534.5 354.9V368.1M535.5 355.0V368.0M536.5 354.6V368.4M537.5 353.8V369.2M538.5 354.6V368.4M539.5 353.7V369.3M540.5 354.6V368.4M541.5 355.6V367.4M542.5 350.7V372.3M543.5 352.7V370.3M544.5 352.7V370.3M545.5 353.2V369.8M546.5 355.5V367.5M547.5 354.6V368.4M548.5 354.8V368.2M549.5 355.9V367.1M550.5 354.6V368.4M551.5 354.6V368.4M552.5 355.5V367.5M553.5 355.3V367.7M554.5 355.0V368.0M555.5 353.7V369.3M556.5 351.5V371.5M557.5 353.7V369.3M558.5 353.1V369.9M559.5 352.6V370.4M560.5 353.4V369.6M561.5 353.6V369.4M562.5 355.6V367.4M563.5 355.1V367.9M564.5 356.1V366.9M565.5 355.1V367.9M566.5 355.3V367.7M567.5 354.8V368.2M568.5 354.9V368.1M569.5 356.4V366.6M570.5 356.0V367.0M571.5 352.9V370.1M572.5 353.6V369.4M573.5 354.5V368.5M574.5 352.5V370.5M575.5 352.2V370.8M576.5 354.7V368.3M577.5 355.3V367.7M578.5 354.9V368.1M579.5 353.7V369.3M580.5 352.5V370.5M581.5 354.0V369.0M582.5 353.6V369.4M583.5 353.4V369.6M584.5 354.8V368.2M585.5 354.5V368.5M586.5 356.1V366.9M587.5 356.3V366.7M588.5 355.5V367.5M589.5 356.5V366.5M590.5 355.5V367.5M591.5 355.8V367.2M592.5 357.0V366.0M593.5 355.7V367.3M594.5 356.9V366.1M595.5 357.1V365.9M596.5 356.1V366.9M597.5 356.4V366.6M598.5 355.8V367.2M599.5 354.2V368.8M600.5 354.8V368.2M601.5 354.8V368.2M602.5 354.5V368.5M603.5 354.8V368.2M604.5 354.8V368.2M605.5 354.6V368.4M606.5 355.8V367.2M607.5 358.5V364.5M608.5 358.4V364.6M609.5 358.7V364.3M610.5 358.7V364.3M611.5 359.1V363.9M612.5 358.3V364.7M613.5 359.0V364.0M614.5 350.6V372.4M615.5 352.7V370.3M616.5 352.1V370.9M617.5 353.8V369.2M618.5 353.5V369.5M619.5 353.6V369.4M620.5 355.8V367.2M621.5 355.8V367.2M622.5 355.4V367.6M623.5 357.2V365.8M624.5 357.3V365.7M625.5 357.7V365.3M626.5 357.3V365.7M627.5 358.1V364.9M628.5 358.0V365.0M629.5 358.3V364.7M630.5 358.7V364.3M631.5 359.3V363.7M632.5 359.1V363.9M633.5 359.7V363.3M634.5 359.7V363.3M635.5 359.6V363.4M636.5 359.8V363.2M637.5 360.0V363.0" stroke="#6666dd" stroke-width="1" fill="none"/></svg>
<div class="a" style="left:206.5px;top:139px;width:1.3px;height:285px;background:#4a3a3a"></div>
<div class="a" style="left:0;top:38px;width:167.5px;height:221px;background:#f2f2f2;box-shadow:1.5px 2px 2.5px rgba(0,0,0,0.45)"></div>
<div class="a" style="left:0;top:38px;width:167.5px;height:1px;background:#d8d8d8"></div>
<div class="a" style="left:0;top:259px;width:169px;height:3px;background:linear-gradient(rgba(0,0,0,0.28),rgba(0,0,0,0.05))"></div>
<div class="a" style="left:167.5px;top:40px;width:2px;height:221px;background:linear-gradient(90deg,rgba(0,0,0,0.25),rgba(0,0,0,0.03))"></div>
<div class="a" style="left:0;top:149px;width:162.5px;height:19.5px;background:#91c9f7"></div>
<div class="a" style="left:23.5px;top:120.2px;width:139px;height:1px;background:#d5d5d5"></div>
<div class="a" style="left:23.5px;top:145.7px;width:139px;height:1px;background:#d5d5d5"></div>
<div class="a" style="left:23.5px;top:189.8px;width:139px;height:1px;background:#d5d5d5"></div>
<div class="a" style="left:23.5px;top:235.3px;width:139px;height:1px;background:#d5d5d5"></div>
<div class="t" style="left:27.5px;top:46.16px;font-size:10.3px;line-height:10.3px;color:#000;font-weight:normal;transform:scaleX(0.9670);">New</div>
<div class="t" style="left:119.17299999999999px;top:46.16px;font-size:10.3px;line-height:10.3px;color:#000;font-weight:normal;transform:scaleX(1.0369);">Ctrl+N</div>
<div class="t" style="left:27.5px;top:65.86px;font-size:10.3px;line-height:10.3px;color:#000;font-weight:normal;transform:scaleX(0.9670);">Open...</div>
<div class="t" style="left:118.54999999999998px;top:65.86px;font-size:10.3px;line-height:10.3px;color:#000;font-weight:normal;transform:scaleX(1.0369);">Ctrl+O</div>
<div class="t" style="left:27.5px;top:84.86px;font-size:10.3px;line-height:10.3px;color:#000;font-weight:normal;transform:scaleX(0.9670);">Recent Files</div>
<svg class="a" style="left:152.5px;top:84.2px" width="6" height="9"><path d="M1 1 L4.5 4.5 L1 8" fill="none" stroke="#333" stroke-width="1.2"/></svg>
<div class="t" style="left:27.5px;top:103.86px;font-size:10.3px;line-height:10.3px;color:#000;font-weight:normal;transform:scaleX(0.9670);">Close</div>
<div class="t" style="left:116.76999999999998px;top:103.86px;font-size:10.3px;line-height:10.3px;color:#000;font-weight:normal;transform:scaleX(1.0369);">Ctrl+W</div>
<div class="t" style="left:27.5px;top:128.96px;font-size:10.3px;line-height:10.3px;color:#000;font-weight:normal;transform:scaleX(0.9670);">Save Project</div>
<svg class="a" style="left:152.5px;top:128.3px" width="6" height="9"><path d="M1 1 L4.5 4.5 L1 8" fill="none" stroke="#333" stroke-width="1.2"/></svg>
<div class="t" style="left:27.5px;top:154.06px;font-size:10.3px;line-height:10.3px;color:#000;font-weight:normal;transform:scaleX(0.9670);">Export</div>
<svg class="a" style="left:152.5px;top:153.4px" width="6" height="9"><path d="M1 1 L4.5 4.5 L1 8" fill="none" stroke="#333" stroke-width="1.2"/></svg>
<div class="t" style="left:27.5px;top:173.36px;font-size:10.3px;line-height:10.3px;color:#000;font-weight:normal;transform:scaleX(0.9670);">Import</div>
<svg class="a" style="left:152.5px;top:172.70000000000002px" width="6" height="9"><path d="M1 1 L4.5 4.5 L1 8" fill="none" stroke="#333" stroke-width="1.2"/></svg>
<div class="t" style="left:27.5px;top:198.56px;font-size:10.3px;line-height:10.3px;color:#000;font-weight:normal;transform:scaleX(0.9670);">Page Setup...</div>
<div class="t" style="left:27.5px;top:217.86px;font-size:10.3px;line-height:10.3px;color:#000;font-weight:normal;transform:scaleX(0.9670);">Print...</div>
<div class="t" style="left:27.5px;top:243.36px;font-size:10.3px;line-height:10.3px;color:#000;font-weight:normal;transform:scaleX(0.9670);">Exit</div>
<div class="t" style="left:118.54999999999998px;top:243.36px;font-size:10.3px;line-height:10.3px;color:#000;font-weight:normal;transform:scaleX(1.0369);">Ctrl+Q</div>
<div class="a" style="left:163px;top:147px;width:245px;height:158px;background:#f2f2f2;border:1px solid #cfcfcf;box-sizing:border-box;box-shadow:2px 2px 3px rgba(0,0,0,0.25)"></div>
<div class="a" style="left:165.5px;top:169px;width:240.5px;height:19px;background:#91c9f7"></div>
<div class="t" style="left:193.8px;top:155.06px;font-size:10.3px;line-height:10.3px;color:#000;font-weight:normal;transform:scaleX(0.9786);">Export as MP3</div>
<div class="t" style="left:193.8px;top:173.66px;font-size:10.3px;line-height:10.3px;color:#000;font-weight:normal;transform:scaleX(0.9786);">Export as WAV</div>
<div class="t" style="left:193.8px;top:192.96px;font-size:10.3px;line-height:10.3px;color:#000;font-weight:normal;transform:scaleX(0.9786);">Export as OGG</div>
<div class="t" style="left:193.8px;top:212.26px;font-size:10.3px;line-height:10.3px;color:#000;font-weight:normal;transform:scaleX(0.9786);">Export Audio...</div>
<div class="t" style="left:332.9405px;top:212.26px;font-size:10.3px;line-height:10.3px;color:#000;font-weight:normal;transform:scaleX(1.0311);">Ctrl+Shift+E</div>
<div class="t" style="left:193.8px;top:231.56px;font-size:10.3px;line-height:10.3px;color:#000;font-weight:normal;transform:scaleX(0.9786);">Export Selected Audio...</div>
<div class="t" style="left:193.8px;top:250.86px;font-size:10.3px;line-height:10.3px;color:#8d8d8d;font-weight:normal;transform:scaleX(0.9786);">Export Labels...</div>
<div class="t" style="left:193.8px;top:270.16px;font-size:10.3px;line-height:10.3px;color:#000;font-weight:normal;transform:scaleX(0.9786);">Export Multiple...</div>
<div class="t" style="left:334.091px;top:270.16px;font-size:10.3px;line-height:10.3px;color:#000;font-weight:normal;transform:scaleX(1.0311);">Ctrl+Shift+L</div>
<div class="t" style="left:193.8px;top:289.46px;font-size:10.3px;line-height:10.3px;color:#8d8d8d;font-weight:normal;transform:scaleX(0.9786);">Export MIDI...</div>
</body></html>
